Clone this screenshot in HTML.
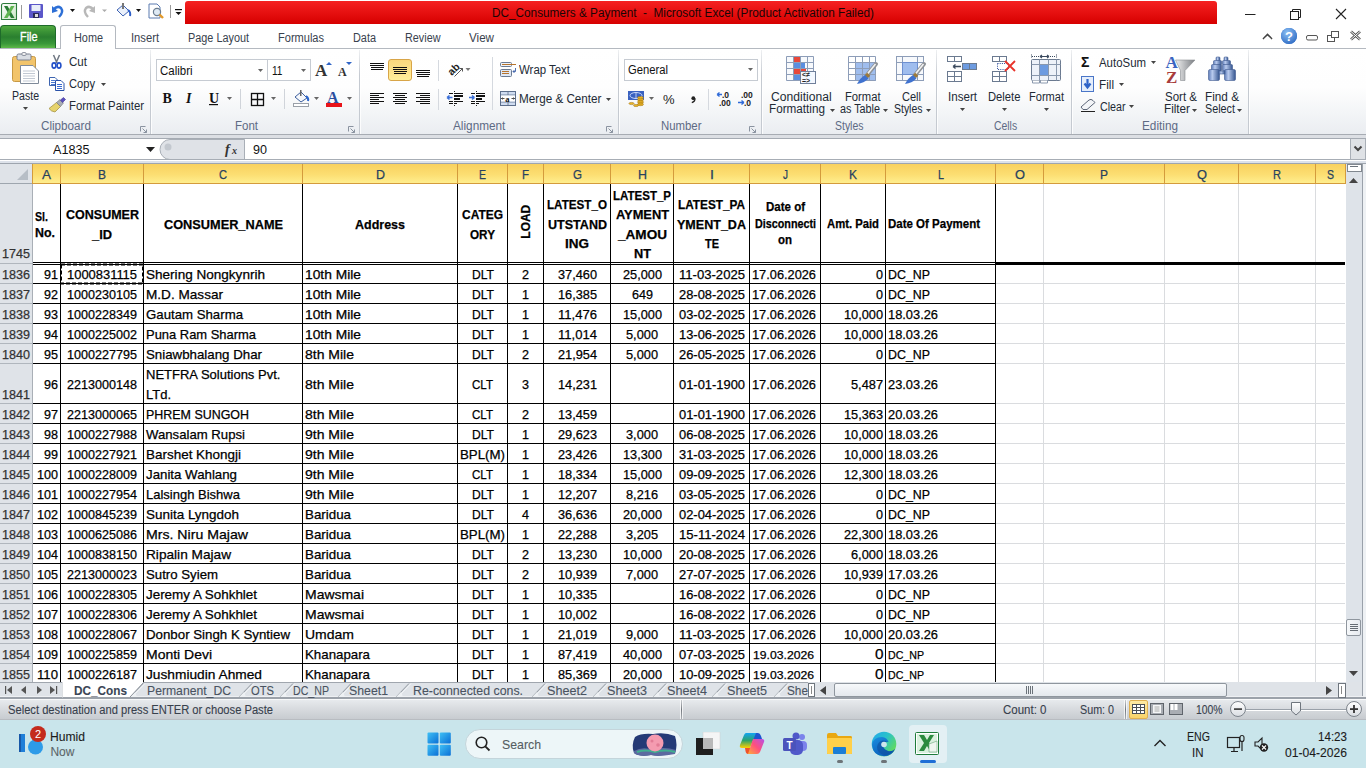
<!DOCTYPE html><html><head><meta charset="utf-8"><style>
html,body{margin:0;padding:0;}
body{width:1366px;height:768px;overflow:hidden;position:relative;background:#fff;font-family:'Liberation Sans',sans-serif;}
body>div,body>svg{position:absolute;}
.t{white-space:pre;line-height:normal;transform-origin:0 0;-webkit-text-stroke:0.25px currentColor;}
</style></head><body>
<div style="left:0px;top:0px;width:1366px;height:25px;background:#fff;"></div>
<div style="left:185px;top:1px;width:1032px;height:23px;background:linear-gradient(#f52222,#e30d0d 60%,#d60000);border-radius:3px 3px 0 0;"></div>
<div class="t" style="left:491.50px;top:6px;font-size:12px;color:#1a0505;transform:scaleX(0.9808);-webkit-text-stroke-width:0.0px;">DC_Consumers &amp; Payment  -  Microsoft Excel (Product Activation Failed)</div>
<svg style="left:0px;top:2px" width="185" height="20">
<defs><linearGradient id="xlg" x1="0" y1="0" x2="1" y2="1"><stop offset="0" stop-color="#ffffff"/><stop offset="1" stop-color="#c8e6c4"/></linearGradient></defs>
<path d="M3.5 1.5 H16.5 V17.5 H1.5 V3.5 Q1.5 1.5 3.5 1.5 Z" fill="url(#xlg)" stroke="#2e7d3c" stroke-width="1.1"/>
<path d="M4 4 L7.5 4 L14.5 16 L11 16 Z" fill="#2a7d35"/>
<path d="M11 4 L14.5 4 L7.5 16 L4 16 Z" fill="#5fb550"/>
<rect x="21" y="3" width="1" height="14" fill="#9a9a9a"/>
<rect x="29" y="2" width="14" height="14" fill="#5b57c9" rx="1"/>
<rect x="31.5" y="3" width="9" height="6" fill="#e9eef8"/>
<rect x="33" y="11" width="6" height="5" fill="#2b2b5a"/><rect x="35" y="12" width="3" height="3" fill="#ddd"/>
<path d="M53 8 Q57 3 61 6 Q64 10 59 15" fill="none" stroke="#2d6fd6" stroke-width="2.4"/>
<path d="M52 4 L52 11 L58 9 Z" fill="#2d6fd6"/>
<path d="M70 7 L75 7 L72.5 10 Z" fill="#111"/>
<path d="M94 8 Q90 3 86 6 Q83 10 88 15" fill="none" stroke="#b8b8b8" stroke-width="2.4"/>
<path d="M95 4 L95 11 L89 9 Z" fill="#b8b8b8"/>
<path d="M102 7.5 L107 7.5 L104.5 10 Z" fill="#aaa"/>
<path d="M117 8 L123 3 L129 9 L123 14 Z" fill="#eaf0fa" stroke="#3e63b4" stroke-width="1"/>
<path d="M128 8 Q131 10 130 14" fill="none" stroke="#2d5fc8" stroke-width="2"/>
<rect x="122" y="1" width="2" height="6" fill="#777"/>
<path d="M136 7 L141 7 L138.5 10 Z" fill="#111"/>
<path d="M149 2 L157 2 L160 5 L160 16 L149 16 Z" fill="#fff" stroke="#5a7ab0" stroke-width="1"/>
<circle cx="157" cy="10" r="3.6" fill="#dfeaf4" stroke="#6b7d90" stroke-width="1.2"/>
<path d="M159.5 12.5 L163 16" stroke="#e39a2a" stroke-width="2.4"/>
<rect x="170" y="3" width="1" height="13" fill="#9a9a9a"/>
<rect x="175" y="7" width="7" height="1.2" fill="#111"/>
<path d="M175.5 10 L181.5 10 L178.5 13 Z" fill="#111"/>
</svg>
<svg style="left:1230px;top:0px" width="136" height="25">
<rect x="15" y="14" width="10.5" height="1" fill="#222"/>
<rect x="60.5" y="11.5" width="8" height="8" fill="none" stroke="#222" stroke-width="1"/>
<path d="M62.5 11.5 L62.5 9.5 L70.5 9.5 L70.5 17.5 L68.5 17.5" fill="none" stroke="#222" stroke-width="1"/>
<path d="M106 9 L116 19 M116 9 L106 19" stroke="#222" stroke-width="1.1"/>
</svg>
<div style="left:0px;top:25px;width:1366px;height:23px;background:#fff;"></div>
<div style="left:0px;top:48px;width:1366px;height:1px;background:#b4b9c0;"></div>
<div style="left:0px;top:25px;width:56px;height:23px;background:linear-gradient(#52aa40 0%,#3b9336 25%,#2a7f2f 50%,#3a983a 80%,#5db949 100%);border:1px solid #1e6b2a;border-bottom:none;border-radius:4px 4px 0 0;box-sizing:border-box;"></div>
<div class="t" style="left:19.50px;top:30px;font-size:12px;color:#fff;transform:scaleX(0.9047);-webkit-text-stroke-width:0.35px;">File</div>
<div style="left:60px;top:25px;width:56px;height:24px;background:#fff;border:1px solid #b4b9c0;border-bottom:none;border-radius:3px 3px 0 0;box-sizing:border-box;"></div>
<div class="t" style="left:73.50px;top:31px;font-size:12px;color:#39424e;transform:scaleX(0.9058);-webkit-text-stroke-width:0.0px;">Home</div>
<div class="t" style="left:131.30px;top:31px;font-size:12px;color:#39424e;transform:scaleX(0.9328);-webkit-text-stroke-width:0.0px;">Insert</div>
<div class="t" style="left:188.40px;top:31px;font-size:12px;color:#39424e;transform:scaleX(0.9052);-webkit-text-stroke-width:0.0px;">Page Layout</div>
<div class="t" style="left:278.20px;top:31px;font-size:12px;color:#39424e;transform:scaleX(0.9197);-webkit-text-stroke-width:0.0px;">Formulas</div>
<div class="t" style="left:353.40px;top:31px;font-size:12px;color:#39424e;transform:scaleX(0.9070);-webkit-text-stroke-width:0.0px;">Data</div>
<div class="t" style="left:405.40px;top:31px;font-size:12px;color:#39424e;transform:scaleX(0.9019);-webkit-text-stroke-width:0.0px;">Review</div>
<div class="t" style="left:469.20px;top:31px;font-size:12px;color:#39424e;transform:scaleX(0.9691);-webkit-text-stroke-width:0.0px;">View</div>
<svg style="left:1255px;top:26px" width="111" height="20">
<path d="M8 13 L12.5 8.5 L17 13" fill="none" stroke="#444" stroke-width="1.6"/>
<path d="M9 13.5 L12.5 10.5 L16 13.5" fill="none" stroke="#fff" stroke-width="0.8"/>
<circle cx="34" cy="10" r="8" fill="#3d7fd6"/>
<circle cx="34" cy="10" r="8" fill="url(#hg)"/>
<defs><radialGradient id="hg" cx="0.4" cy="0.3" r="0.8"><stop offset="0" stop-color="#8cc0f5"/><stop offset="1" stop-color="#2a66c0"/></radialGradient></defs>
<text x="34" y="14.5" font-family="Liberation Sans" font-size="13" font-weight="bold" fill="#fff" text-anchor="middle">?</text>
<rect x="51.5" y="9.5" width="11" height="4.5" rx="1.5" fill="#fdfdfd" stroke="#555" stroke-width="1"/>
<rect x="72.5" y="9.5" width="7" height="6" fill="#fff" stroke="#555"/>
<rect x="76.5" y="5.5" width="7" height="6" fill="#fff" stroke="#555"/>
<path d="M96 5.5 L105 13.5 M105 5.5 L96 13.5" stroke="#555" stroke-width="2.6"/>
<path d="M96 5.5 L105 13.5 M105 5.5 L96 13.5" stroke="#fff" stroke-width="1"/>
</svg>
<div style="left:0px;top:49px;width:1366px;height:85px;background:linear-gradient(#ffffff 0%,#fefefe 45%,#f3f5f7 75%,#eaedf1 100%);"></div>
<div style="left:0px;top:134px;width:1366px;height:1px;background:#a7acb3;"></div>
<div style="left:0px;top:135px;width:1366px;height:3px;background:#dcdfe4;"></div>
<div style="left:150px;top:50px;width:1px;height:84px;background:linear-gradient(rgba(200,205,212,0.3),#c5cad1 30%,#c5cad1);"></div>
<div style="left:151px;top:50px;width:1px;height:84px;background:rgba(255,255,255,0.8);"></div>
<div style="left:359px;top:50px;width:1px;height:84px;background:linear-gradient(rgba(200,205,212,0.3),#c5cad1 30%,#c5cad1);"></div>
<div style="left:360px;top:50px;width:1px;height:84px;background:rgba(255,255,255,0.8);"></div>
<div style="left:618px;top:50px;width:1px;height:84px;background:linear-gradient(rgba(200,205,212,0.3),#c5cad1 30%,#c5cad1);"></div>
<div style="left:619px;top:50px;width:1px;height:84px;background:rgba(255,255,255,0.8);"></div>
<div style="left:761px;top:50px;width:1px;height:84px;background:linear-gradient(rgba(200,205,212,0.3),#c5cad1 30%,#c5cad1);"></div>
<div style="left:762px;top:50px;width:1px;height:84px;background:rgba(255,255,255,0.8);"></div>
<div style="left:936px;top:50px;width:1px;height:84px;background:linear-gradient(rgba(200,205,212,0.3),#c5cad1 30%,#c5cad1);"></div>
<div style="left:937px;top:50px;width:1px;height:84px;background:rgba(255,255,255,0.8);"></div>
<div style="left:1071px;top:50px;width:1px;height:84px;background:linear-gradient(rgba(200,205,212,0.3),#c5cad1 30%,#c5cad1);"></div>
<div style="left:1072px;top:50px;width:1px;height:84px;background:rgba(255,255,255,0.8);"></div>
<div style="left:1248px;top:50px;width:1px;height:84px;background:linear-gradient(rgba(200,205,212,0.3),#c5cad1 30%,#c5cad1);"></div>
<div style="left:1249px;top:50px;width:1px;height:84px;background:rgba(255,255,255,0.8);"></div>
<div class="t" style="left:40.60px;top:119px;font-size:12px;color:#5d6a84;transform:scaleX(0.9732);-webkit-text-stroke-width:0.0px;">Clipboard</div>
<div class="t" style="left:234.50px;top:119px;font-size:12px;color:#5d6a84;transform:scaleX(0.9577);-webkit-text-stroke-width:0.0px;">Font</div>
<div class="t" style="left:453.20px;top:119px;font-size:12px;color:#5d6a84;transform:scaleX(0.9817);-webkit-text-stroke-width:0.0px;">Alignment</div>
<div class="t" style="left:660.50px;top:119px;font-size:12px;color:#5d6a84;transform:scaleX(0.9488);-webkit-text-stroke-width:0.0px;">Number</div>
<div class="t" style="left:835.40px;top:119px;font-size:12px;color:#5d6a84;transform:scaleX(0.8719);-webkit-text-stroke-width:0.0px;">Styles</div>
<div class="t" style="left:993.60px;top:119px;font-size:12px;color:#5d6a84;transform:scaleX(0.8661);-webkit-text-stroke-width:0.0px;">Cells</div>
<div class="t" style="left:1142.40px;top:119px;font-size:12px;color:#5d6a84;transform:scaleX(0.9808);-webkit-text-stroke-width:0.0px;">Editing</div>
<svg style="left:140px;top:126px" width="8" height="8"><path d="M0.5 0.5 L5.5 0.5 M0.5 0.5 L0.5 5.5" stroke="#8a93a0"/><path d="M2.5 2.5 L6.5 6.5 M6.5 3.5 L6.5 6.5 L3.5 6.5" stroke="#8a93a0" fill="none"/></svg>
<svg style="left:348px;top:126px" width="8" height="8"><path d="M0.5 0.5 L5.5 0.5 M0.5 0.5 L0.5 5.5" stroke="#8a93a0"/><path d="M2.5 2.5 L6.5 6.5 M6.5 3.5 L6.5 6.5 L3.5 6.5" stroke="#8a93a0" fill="none"/></svg>
<svg style="left:606px;top:126px" width="8" height="8"><path d="M0.5 0.5 L5.5 0.5 M0.5 0.5 L0.5 5.5" stroke="#8a93a0"/><path d="M2.5 2.5 L6.5 6.5 M6.5 3.5 L6.5 6.5 L3.5 6.5" stroke="#8a93a0" fill="none"/></svg>
<svg style="left:749px;top:126px" width="8" height="8"><path d="M0.5 0.5 L5.5 0.5 M0.5 0.5 L0.5 5.5" stroke="#8a93a0"/><path d="M2.5 2.5 L6.5 6.5 M6.5 3.5 L6.5 6.5 L3.5 6.5" stroke="#8a93a0" fill="none"/></svg>
<svg style="left:8px;top:52px" width="36" height="36">
<rect x="4.5" y="4.5" width="23" height="25" rx="2" fill="#f2c46b" stroke="#c79944"/>
<rect x="9" y="2" width="14" height="6" rx="1.5" fill="#d9dde3" stroke="#7b8190"/>
<rect x="14" y="0.5" width="4" height="3" rx="1" fill="#eee" stroke="#7b8190" stroke-width="0.8"/>
<path d="M12.5 13.5 L25 13.5 L30.5 19 L30.5 31.5 L12.5 31.5 Z" fill="#fff" stroke="#7f8a99"/>
<path d="M15 19h12M15 21.5h12M15 24h12M15 26.5h12M15 29h12" stroke="#c2c9d3" stroke-width="1"/>
</svg>
<div class="t" style="left:11.50px;top:89px;font-size:12px;color:#222a35;transform:scaleX(0.8798);-webkit-text-stroke-width:0.0px;">Paste</div>
<svg style="left:23px;top:107px" width="5" height="3"><path d="M0 0 L5 0 L2.5 3 Z" fill="#444"/></svg>
<svg style="left:48px;top:53px" width="18" height="62">
<path d="M5.5 2 L9 10 M11.5 2 L8 10" stroke="#6f7782" stroke-width="1.5"/>
<ellipse cx="6" cy="12.5" rx="1.9" ry="2.6" fill="#fff" stroke="#2350c8" stroke-width="1.6"/>
<ellipse cx="11" cy="12.5" rx="1.9" ry="2.6" fill="#fff" stroke="#2350c8" stroke-width="1.6"/>
<path d="M1.5 24.5 H7 L9.5 27 V32.5 H1.5 Z" fill="#fff" stroke="#3d64b0"/>
<path d="M3 27.5h4M3 29.5h5M3 31.5h5" stroke="#4a78d0"/>
<path d="M7.5 27.5 H13 L16 30.5 V37.5 H7.5 Z" fill="#fff" stroke="#2b52a8"/>
<path d="M9 31.5h5M9 33.5h5M9 35.5h5" stroke="#3a6ad0"/>
<path d="M1 55.5 L8.5 49.5 L12.5 53.5 L7 59 Q3 58.5 1 55.5 Z" fill="#e6d36c" stroke="#9c8a3a" stroke-width="0.7"/>
<path d="M8.5 49.5 L12 46.5 L15.5 50 L12.5 53.5 Z" fill="#a9adb5" stroke="#6f737a" stroke-width="0.6"/>
<path d="M12.5 47 L15.5 44.5 L17.5 46.5 L14.5 49.5 Z" fill="#5a4fc0" stroke="#3a3090" stroke-width="0.6"/>
</svg>
<div class="t" style="left:68.50px;top:55px;font-size:12px;color:#222a35;transform:scaleX(0.9632);-webkit-text-stroke-width:0.0px;">Cut</div>
<div class="t" style="left:68.50px;top:77px;font-size:12px;color:#222a35;transform:scaleX(0.9281);-webkit-text-stroke-width:0.0px;">Copy</div>
<svg style="left:101px;top:83px" width="5" height="3"><path d="M0 0 L5 0 L2.5 3 Z" fill="#444"/></svg>
<div class="t" style="left:68.60px;top:99px;font-size:12px;color:#222a35;transform:scaleX(0.9451);-webkit-text-stroke-width:0.0px;">Format Painter</div>
<div style="left:156px;top:59px;width:112px;height:22px;background:#fff;border:1px solid #c6cbd2;box-sizing:border-box;"></div>
<div style="left:267px;top:59px;width:44px;height:22px;background:#fff;border:1px solid #c6cbd2;box-sizing:border-box;"></div>
<div class="t" style="left:159.70px;top:64px;font-size:12px;color:#111;transform:scaleX(0.9554);-webkit-text-stroke-width:0.0px;">Calibri</div>
<div class="t" style="left:271.80px;top:64px;font-size:12px;color:#111;transform:scaleX(0.8421);-webkit-text-stroke-width:0.0px;">11</div>
<svg style="left:258px;top:69px" width="5" height="3"><path d="M0 0 L5 0 L2.5 3 Z" fill="#666"/></svg>
<svg style="left:301px;top:69px" width="5" height="3"><path d="M0 0 L5 0 L2.5 3 Z" fill="#666"/></svg>
<svg style="left:314px;top:60px" width="40" height="18">
<text x="1" y="16" font-family="Liberation Serif" font-size="17" font-weight="bold" fill="#333">A</text>
<path d="M12 5 L15 2 L18 5 Z" fill="#2f64c6"/>
<text x="24" y="16" font-family="Liberation Serif" font-size="12" font-weight="bold" fill="#333">A</text>
<path d="M32 2 L38 2 L35 5 Z" fill="#2f64c6"/>
</svg>
<svg style="left:160px;top:88px" width="200" height="22">
<text x="2.5" y="15" font-family="Liberation Serif" font-size="14" font-weight="bold" fill="#111">B</text>
<text x="26" y="15" font-family="Liberation Serif" font-size="14" font-style="italic" font-weight="bold" fill="#111">I</text>
<text x="49" y="15" font-family="Liberation Serif" font-size="14" font-weight="bold" fill="#111">U</text>
<rect x="49" y="16" width="9" height="1.2" fill="#111"/>
<path d="M67 9 L72 9 L69.5 12 Z" fill="#666"/>
<rect x="80" y="1" width="1" height="20" fill="#d0d4da"/>
<rect x="91.5" y="5.5" width="12" height="12" fill="none" stroke="#111" stroke-width="1.3"/>
<path d="M97.5 5.5 V17.5 M91.5 11.5 H103.5" stroke="#111" stroke-width="1.3"/>
<path d="M111 9 L116 9 L113.5 12 Z" fill="#666"/>
<rect x="124" y="1" width="1" height="20" fill="#d0d4da"/>
<path d="M135 9 L141 4 L147 10 L141 14 Z" fill="#f6f8fb" stroke="#3d5f9e"/>
<path d="M146 8 Q149 10 148 13" stroke="#2d66cc" stroke-width="2" fill="none"/>
<rect x="140" y="2" width="1.5" height="6" fill="#666"/>
<rect x="133.5" y="15.5" width="15" height="3" fill="#fff" stroke="#9aa0a8"/>
<path d="M154 9 L159 9 L156.5 12 Z" fill="#666"/>
<text x="167" y="15" font-family="Liberation Serif" font-size="16" font-weight="bold" fill="#2a4ea0">A</text>
<rect x="166" y="15" width="16" height="4" fill="#e8141a"/>
<path d="M187 9 L192 9 L189.5 12 Z" fill="#666"/>
</svg>
<div style="left:388px;top:59px;width:24px;height:22px;background:linear-gradient(#fcd97e,#fde58f 60%,#fff09b);border:1px solid #d8a548;border-radius:3px;box-sizing:border-box;"></div>
<svg style="left:360px;top:56px" width="260" height="56"><rect x="10" y="7" width="14" height="1" fill="#111"/><rect x="10" y="9" width="14" height="1" fill="#111"/><rect x="11" y="11" width="13" height="1" fill="#111"/><rect x="11" y="13" width="12" height="1" fill="#111"/><rect x="33" y="11" width="14" height="1" fill="#111"/><rect x="33" y="13" width="14" height="1" fill="#111"/><rect x="34" y="15" width="13" height="1" fill="#111"/><rect x="34" y="17" width="12" height="1" fill="#111"/><rect x="56" y="14" width="14" height="1" fill="#111"/><rect x="56" y="16" width="14" height="1" fill="#111"/><rect x="57" y="18" width="13" height="1" fill="#111"/><rect x="57" y="20" width="12" height="1" fill="#111"/><rect x="78" y="4" width="1" height="21" fill="#d5d9df"/><rect x="78" y="33" width="1" height="21" fill="#d5d9df"/><g transform="rotate(-45 93.5 13)"><text x="87.3" y="16.8" font-family="Liberation Sans" font-size="10.5" font-weight="bold" fill="#222">ab</text></g><path d="M94.5 20.5 L102.5 12.5 M99.5 12.5 H102.5 V15.5" stroke="#444" stroke-width="0.9" fill="none"/><path d="M105.5 12 L110.5 12 L108 15 Z" fill="#777"/><rect x="132" y="1" width="1" height="53" fill="#d5d9df"/><rect x="10" y="37" width="14" height="1" fill="#111"/><rect x="10" y="39" width="9" height="1" fill="#111"/><rect x="10" y="41" width="14" height="1" fill="#111"/><rect x="10" y="43" width="9" height="1" fill="#111"/><rect x="10" y="45" width="14" height="1" fill="#111"/><rect x="10" y="47" width="9" height="1" fill="#111"/><rect x="33" y="37" width="14" height="1" fill="#111"/><rect x="35" y="39" width="10" height="1" fill="#111"/><rect x="33" y="41" width="14" height="1" fill="#111"/><rect x="35" y="43" width="10" height="1" fill="#111"/><rect x="33" y="45" width="14" height="1" fill="#111"/><rect x="35" y="47" width="10" height="1" fill="#111"/><rect x="56" y="37" width="14" height="1" fill="#111"/><rect x="60" y="39" width="10" height="1" fill="#111"/><rect x="56" y="41" width="14" height="1" fill="#111"/><rect x="60" y="43" width="10" height="1" fill="#111"/><rect x="56" y="45" width="14" height="1" fill="#111"/><rect x="60" y="47" width="10" height="1" fill="#111"/><g transform="translate(0,0)" shape-rendering="crispEdges"><rect x="94" y="35" width="1" height="1" fill="#222"/><rect x="94" y="49" width="1" height="1" fill="#222"/><rect x="94" y="37" width="9" height="1" fill="#111"/><rect x="94" y="39" width="9" height="2" fill="#111"/><rect x="94" y="42" width="6" height="2" fill="#111"/><rect x="94" y="45" width="9" height="1" fill="#111"/><rect x="94" y="47" width="3" height="1" fill="#111"/><rect x="89" y="37" width="4" height="1" fill="#111"/><rect x="89" y="45" width="4" height="1" fill="#111"/><rect x="89" y="47" width="4" height="1" fill="#111"/></g><path transform="translate(0,0)" d="M87 41.5 L92.5 41.5 M87 41.5 L89.5 39.5 M87 41.5 L89.5 43.5" stroke="#3a6fd8" stroke-width="1.6" fill="none"/><g transform="translate(22,0)" shape-rendering="crispEdges"><rect x="94" y="35" width="1" height="1" fill="#222"/><rect x="94" y="49" width="1" height="1" fill="#222"/><rect x="94" y="37" width="9" height="1" fill="#111"/><rect x="94" y="39" width="9" height="2" fill="#111"/><rect x="94" y="42" width="6" height="2" fill="#111"/><rect x="94" y="45" width="9" height="1" fill="#111"/><rect x="94" y="47" width="3" height="1" fill="#111"/><rect x="89" y="37" width="4" height="1" fill="#111"/><rect x="89" y="45" width="4" height="1" fill="#111"/><rect x="89" y="47" width="4" height="1" fill="#111"/></g><path transform="translate(22,0)" d="M87 41.5 L92.5 41.5 M92.5 41.5 L90 39.5 M92.5 41.5 L90 43.5" stroke="#3a6fd8" stroke-width="1.6" fill="none"/><rect x="140.5" y="6.5" width="11" height="4" rx="1" fill="#eef3fa" stroke="#6a7a92"/>
<path d="M142 8.5h14" stroke="#b8742c" stroke-width="1"/>
<rect x="140.5" y="13.5" width="11" height="7" rx="1" fill="#dfe8f5" stroke="#6a7a92"/>
<path d="M142 15.5h7M142 17.5h7" stroke="#b8742c" stroke-width="1"/>
<path d="M155.5 12 V15.5 H153 M153 15.5 l1.5 -1.5 M153 15.5 l1.5 1.5" stroke="#3a5fa8" stroke-width="0.9" fill="none"/>
<rect x="140.5" y="35.5" width="15" height="14" fill="#cfdcf0" stroke="#5d6f8c"/>
<path d="M148 35.5v3.5M148 46v3.5M140.5 39h15M140.5 46h15" stroke="#5d6f8c" stroke-width="0.8"/>
<rect x="141" y="39.5" width="14" height="6" fill="#fff"/>
<path d="M141.5 42.5h3M141.5 42.5l1 -1M141.5 42.5l1 1M154.5 42.5h-3M154.5 42.5l-1 -1M154.5 42.5l-1 1" stroke="#222" stroke-width="0.8" fill="none"/>
<text x="145.3" y="45.5" font-family="Liberation Serif" font-size="8.5" font-weight="bold" fill="#111">a</text></svg>
<div class="t" style="left:519.40px;top:63px;font-size:12px;color:#222a35;transform:scaleX(0.9519);-webkit-text-stroke-width:0.0px;">Wrap Text</div>
<div class="t" style="left:519.40px;top:92px;font-size:12px;color:#222a35;transform:scaleX(0.9740);-webkit-text-stroke-width:0.0px;">Merge &amp; Center</div>
<svg style="left:606px;top:98px" width="5" height="3"><path d="M0 0 L5 0 L2.5 3 Z" fill="#444"/></svg>
<div style="left:624px;top:59px;width:134px;height:22px;background:#fff;border:1px solid #c6cbd2;box-sizing:border-box;"></div>
<div class="t" style="left:627.60px;top:63px;font-size:12px;color:#111;transform:scaleX(0.9367);-webkit-text-stroke-width:0.0px;">General</div>
<svg style="left:748px;top:68px" width="5" height="3"><path d="M0 0 L5 0 L2.5 3 Z" fill="#666"/></svg>
<svg style="left:626px;top:88px" width="132" height="22">
<rect x="2" y="3" width="16" height="9" fill="#3a62c0"/>
<ellipse cx="10" cy="7.5" rx="6" ry="3" fill="none" stroke="#d7e3ff" stroke-width="0.9"/>
<path d="M10 4.5v6" stroke="#d7e3ff" stroke-width="0.8"/>
<g fill="#e9b424" stroke="#9a6c10" stroke-width="0.5">
<ellipse cx="14.5" cy="16.5" rx="3" ry="1.2"/><ellipse cx="14.5" cy="14.8" rx="3" ry="1.2"/><ellipse cx="14.5" cy="13.1" rx="3" ry="1.2"/><ellipse cx="14.5" cy="11.4" rx="3" ry="1.2"/><ellipse cx="14.5" cy="9.7" rx="3" ry="1.2"/>
<ellipse cx="5.5" cy="15.5" rx="2.6" ry="1.1"/><ellipse cx="10" cy="17.5" rx="2.6" ry="1.1"/>
</g>
<path d="M23 9 L28 9 L25.5 12 Z" fill="#666"/>
<text x="37" y="15.8" font-family="Liberation Sans" font-size="13" fill="#222">%</text>
<circle cx="67.3" cy="10.2" r="1.9" fill="#222"/><path d="M69 10.5 Q69.2 13.5 65.8 14.6" stroke="#222" stroke-width="1.3" fill="none"/>
<rect x="82" y="1" width="1" height="21" fill="#d5d9df"/>
<text x="96" y="10" font-family="Liberation Sans" font-size="8.5" font-weight="bold" fill="#222">.0</text>
<text x="93" y="17.5" font-family="Liberation Sans" font-size="8.5" font-weight="bold" fill="#222">.00</text>
<path d="M91 6.5 L96 6.5 M91 6.5 L93.5 4.5 M91 6.5 L93.5 8.5" stroke="#2f6ad8" stroke-width="1.3"/>
<text x="115" y="10" font-family="Liberation Sans" font-size="8.5" font-weight="bold" fill="#222">.00</text>
<text x="118" y="17.5" font-family="Liberation Sans" font-size="8.5" font-weight="bold" fill="#222">.0</text>
<path d="M112 14.5 L118 14.5 M118 14.5 L115.5 12.5 M118 14.5 L115.5 16.5" stroke="#2f6ad8" stroke-width="1.3"/>
</svg>
<svg style="left:784px;top:54px" width="146" height="32">
<defs><linearGradient id="brh" x1="0" y1="0" x2="1" y2="0"><stop offset="0" stop-color="#fff"/><stop offset="1" stop-color="#9a9da2"/></linearGradient></defs>
<g shape-rendering="crispEdges">
<rect x="2" y="2" width="28" height="25" fill="#f7f9fc"/>
<rect x="9" y="2" width="7" height="6" fill="#e8473a"/><rect x="9" y="8" width="12" height="7" fill="#5a8ee0"/>
<rect x="9" y="15" width="13" height="6" fill="#e8473a"/><rect x="9" y="21" width="7" height="6" fill="#5a8ee0"/>
</g>
<path d="M2.5 2.5H29.5V26.5H2.5Z M2.5 8.5H29.5M2.5 14.5H29.5M2.5 20.5H29.5M9.5 2.5V26.5M16.5 2.5V26.5M23.5 2.5V26.5" fill="none" stroke="#8d9db8"/>
<rect x="16.5" y="17.5" width="15" height="12" fill="#f4f8ff" stroke="#6f7f9a"/>
<text x="18" y="23" font-family="Liberation Sans" font-size="7" font-weight="bold" fill="#222">&lt;&#8800;</text>
<text x="18" y="29" font-family="Liberation Sans" font-size="7" font-weight="bold" fill="#222">=&gt;</text>
<g transform="translate(62,0)">
<rect x="9" y="8" width="21" height="19" fill="#9fbdee" shape-rendering="crispEdges"/>
<path d="M2.5 2.5H29.5V26.5H2.5Z M2.5 8.5H29.5M2.5 14.5H29.5M2.5 20.5H29.5M9.5 2.5V26.5M16.5 2.5V26.5M23.5 2.5V26.5" fill="none" stroke="#8d9db8"/>
<path d="M30 10 L21 21" stroke="#8e9297" stroke-width="4" stroke-linecap="round"/><path d="M29.5 10 L21 20.5" stroke="#f3f3f3" stroke-width="1.6"/>
<path d="M20 20 L23 23" stroke="#9b7a3c" stroke-width="3.5"/>
<path d="M19 21 Q14 24 11 30 Q18 29 22.5 24.5 Z" fill="#3f72cf"/>
</g>
<g transform="translate(110,0)">
<rect x="2.5" y="2.5" width="27" height="24" fill="#f7f9fc" stroke="#8d9db8"/>
<path d="M2.5 8.5H29.5M2.5 20.5H29.5M8.5 2.5V26.5M23.5 2.5V26.5" stroke="#8d9db8"/>
<rect x="8.5" y="8.5" width="15" height="12" fill="#9fbdee" stroke="#6d8fd0"/>
<path d="M30 10 L21 21" stroke="#8e9297" stroke-width="4" stroke-linecap="round"/><path d="M29.5 10 L21 20.5" stroke="#f3f3f3" stroke-width="1.6"/>
<path d="M20 20 L23 23" stroke="#9b7a3c" stroke-width="3.5"/>
<path d="M19 21 Q14 24 11 30 Q18 29 22.5 24.5 Z" fill="#3f72cf"/>
</g>
</svg>
<div class="t" style="left:771.10px;top:90px;font-size:12px;color:#222a35;transform:scaleX(1.0092);-webkit-text-stroke-width:0.0px;">Conditional</div>
<div class="t" style="left:769.00px;top:102px;font-size:12px;color:#222a35;transform:scaleX(0.9763);-webkit-text-stroke-width:0.0px;">Formatting</div>
<svg style="left:829.5px;top:109px" width="5" height="3"><path d="M0 0 L5 0 L2.5 3 Z" fill="#444"/></svg>
<div class="t" style="left:845.40px;top:90px;font-size:12px;color:#222a35;transform:scaleX(0.9365);-webkit-text-stroke-width:0.0px;">Format</div>
<div class="t" style="left:839.50px;top:102px;font-size:12px;color:#222a35;transform:scaleX(0.8992);-webkit-text-stroke-width:0.0px;">as Table</div>
<svg style="left:883px;top:109px" width="5" height="3"><path d="M0 0 L5 0 L2.5 3 Z" fill="#444"/></svg>
<div class="t" style="left:902.00px;top:90px;font-size:12px;color:#222a35;transform:scaleX(0.9191);-webkit-text-stroke-width:0.0px;">Cell</div>
<div class="t" style="left:893.50px;top:102px;font-size:12px;color:#222a35;transform:scaleX(0.8719);-webkit-text-stroke-width:0.0px;">Styles</div>
<svg style="left:925.5px;top:109px" width="5" height="3"><path d="M0 0 L5 0 L2.5 3 Z" fill="#444"/></svg>
<svg style="left:945px;top:53px" width="120" height="34">
<g stroke="#6b7a90" fill="#fff">
<rect x="2.5" y="3.5" width="14" height="5"/><path d="M9.5 3.5v5"/>
<rect x="2.5" y="18.5" width="14" height="10"/><path d="M9.5 18.5v10M2.5 23.5h14"/>
<rect x="17.5" y="10.5" width="14" height="6" fill="#6d9be0"/><path d="M24.5 10.5v6"/>
</g>
<path d="M8 13.5 H16 M8 13.5 L10.5 11.5 M8 13.5 L10.5 15.5" stroke="#3b4a5e" stroke-width="1.3" fill="none"/>
<g stroke="#6b7a90" fill="#fff">
<rect x="47.5" y="3.5" width="14" height="5"/><path d="M54.5 3.5v5"/>
<rect x="47.5" y="18.5" width="14" height="10"/><path d="M54.5 18.5v10M47.5 23.5h14"/>
</g>
<rect x="52.5" y="10.5" width="11" height="6" fill="none" stroke="#2b4a9a" stroke-dasharray="1 1.2"/>
<path d="M60 8 L70 18 M70 8 L60 18" stroke="#e8332a" stroke-width="1.8"/>
<g transform="translate(0,0)">
<path d="M86.5 1.5v4M111.5 1.5v4M87 3.5h24" stroke="#3b4a5e" stroke-dasharray="1 1"/>
<path d="M95 3.5h9 M95 3.5l2 -1.5M95 3.5l2 1.5M104 3.5l-2 -1.5M104 3.5l-2 1.5" stroke="#3b4a5e" stroke-width="1.1" fill="none"/>
<rect x="86.5" y="6.5" width="29" height="21" rx="1" fill="#eef2f9" stroke="#6b7a90"/>
<path d="M86.5 11.5h29M86.5 22.5h29M94.5 6.5v21M103.5 6.5v21M111.5 6.5v21" stroke="#8a98ad"/>
<rect x="95" y="12" width="8" height="10" fill="#6d9be0"/>
<path d="M87.5 27.5v2.5h7v-2.5M95.5 27.5v2.5h7v-2.5" stroke="#8a98ad" fill="#fff"/>
</g>
</svg>
<div class="t" style="left:948.20px;top:90px;font-size:12px;color:#222a35;transform:scaleX(0.9662);-webkit-text-stroke-width:0.0px;">Insert</div>
<div class="t" style="left:988.30px;top:90px;font-size:12px;color:#222a35;transform:scaleX(0.9341);-webkit-text-stroke-width:0.0px;">Delete</div>
<div class="t" style="left:1028.60px;top:90px;font-size:12px;color:#222a35;transform:scaleX(0.9207);-webkit-text-stroke-width:0.0px;">Format</div>
<svg style="left:960px;top:108px" width="5" height="3"><path d="M0 0 L5 0 L2.5 3 Z" fill="#444"/></svg>
<svg style="left:1002px;top:108px" width="5" height="3"><path d="M0 0 L5 0 L2.5 3 Z" fill="#444"/></svg>
<svg style="left:1044px;top:108px" width="5" height="3"><path d="M0 0 L5 0 L2.5 3 Z" fill="#444"/></svg>
<svg style="left:1078px;top:52px" width="170" height="64">
<text x="3" y="14.5" font-family="Liberation Sans" font-size="14" font-weight="bold" fill="#111">&#931;</text>
<rect x="3.5" y="24.5" width="12" height="15" fill="#e5eefb" stroke="#4a76c8"/>
<path d="M9.5 27 V34 M6.5 31.5 L9.5 35.5 L12.5 31.5" stroke="#2f64c8" stroke-width="2.2" fill="none"/>
<path d="M3 55 L11 48 Q13 46.5 15 48.5 L17 50.5 L9 57.5 L5 57.5 Z" fill="#f3f5f8" stroke="#5b6577"/>
<path d="M3 59.5h14" stroke="#222"/>
<defs><linearGradient id="fun" x1="0" y1="0" x2="1" y2="0"><stop offset="0" stop-color="#f0f0f0"/><stop offset="0.5" stop-color="#b5b7ba"/><stop offset="1" stop-color="#7b7e83"/></linearGradient>
<linearGradient id="bino" x1="0" y1="0" x2="1" y2="0"><stop offset="0" stop-color="#5d7bb8"/><stop offset="0.35" stop-color="#b9cbee"/><stop offset="1" stop-color="#34548f"/></linearGradient></defs>
<path d="M97.5 8 H117 L107 18.5 V28.5 H102.5 V18.5 Z" fill="url(#fun)" stroke="#8a8d92" stroke-width="0.6"/>
<text x="87.5" y="15.6" font-family="Liberation Serif" font-size="17" font-weight="bold" fill="#3a64c0">A</text>
<text x="88" y="30.8" font-family="Liberation Serif" font-size="17" font-weight="bold" fill="#a83c3c">Z</text>
<g fill="url(#bino)" stroke="#3f5b90" stroke-width="0.6">
<rect x="138" y="5" width="4" height="4" rx="1"/><rect x="146" y="5" width="4" height="4" rx="1"/>
<rect x="135.5" y="8.5" width="8" height="4.5" rx="1"/><rect x="144.5" y="8.5" width="8" height="4.5" rx="1"/>
<rect x="133.5" y="12.5" width="10" height="6.5" rx="1"/><rect x="144.5" y="12.5" width="10" height="6.5" rx="1"/>
<rect x="130.5" y="17.5" width="11" height="11" rx="1.5"/><rect x="146.5" y="17.5" width="11" height="11" rx="1.5"/>
<rect x="141" y="19" width="6" height="3"/>
</g>
</svg>
<div class="t" style="left:1099.20px;top:56px;font-size:12px;color:#222a35;transform:scaleX(0.9522);-webkit-text-stroke-width:0.0px;">AutoSum</div>
<svg style="left:1151px;top:61px" width="5" height="3"><path d="M0 0 L5 0 L2.5 3 Z" fill="#444"/></svg>
<div class="t" style="left:1099.00px;top:78px;font-size:12px;color:#222a35;transform:scaleX(0.9786);-webkit-text-stroke-width:0.0px;">Fill</div>
<svg style="left:1119px;top:83px" width="5" height="3"><path d="M0 0 L5 0 L2.5 3 Z" fill="#444"/></svg>
<div class="t" style="left:1099.60px;top:100px;font-size:12px;color:#222a35;transform:scaleX(0.8889);-webkit-text-stroke-width:0.0px;">Clear</div>
<svg style="left:1129px;top:105px" width="5" height="3"><path d="M0 0 L5 0 L2.5 3 Z" fill="#444"/></svg>
<div class="t" style="left:1164.80px;top:90px;font-size:12px;color:#222a35;transform:scaleX(0.9593);-webkit-text-stroke-width:0.0px;">Sort &amp;</div>
<div class="t" style="left:1163.50px;top:102px;font-size:12px;color:#222a35;transform:scaleX(0.9748);-webkit-text-stroke-width:0.0px;">Filter</div>
<svg style="left:1192px;top:109px" width="5" height="3"><path d="M0 0 L5 0 L2.5 3 Z" fill="#444"/></svg>
<div class="t" style="left:1205.20px;top:90px;font-size:12px;color:#222a35;transform:scaleX(0.9802);-webkit-text-stroke-width:0.0px;">Find &amp;</div>
<div class="t" style="left:1204.50px;top:102px;font-size:12px;color:#222a35;transform:scaleX(0.8993);-webkit-text-stroke-width:0.0px;">Select</div>
<svg style="left:1237px;top:109px" width="5" height="3"><path d="M0 0 L5 0 L2.5 3 Z" fill="#444"/></svg>
<div style="left:0px;top:138px;width:1366px;height:26px;background:#e1e5ea;"></div>
<div style="left:0px;top:138px;width:1366px;height:1px;background:#a5abb3;"></div>
<div style="left:0px;top:139px;width:175px;height:20px;background:#fff;"></div>
<div class="t" style="left:52.50px;top:142px;font-size:13px;color:#111;transform:scaleX(0.9709);-webkit-text-stroke-width:0.0px;">A1835</div>
<svg style="left:146px;top:147px" width="9" height="5"><path d="M0 0 L9 0 L4.5 5 Z" fill="#222"/></svg>
<svg style="left:158px;top:139px" width="90" height="21">
<path d="M12 0.5 H86.5 V20.5 H12 A10 10 0 0 1 12 0.5 Z" fill="#dfe2e7" stroke="#a9afb7"/>
<circle cx="10" cy="8" r="3.5" fill="#c3c8cf"/>
<text x="67" y="15" font-family="Liberation Serif" font-size="14" font-style="italic" font-weight="bold" fill="#333">f</text>
<text x="74" y="15" font-family="Liberation Serif" font-size="10" font-style="italic" font-weight="bold" fill="#333">x</text>
</svg>
<div style="left:245px;top:139px;width:1105px;height:21px;background:#fff;"></div>
<div class="t" style="left:253.00px;top:142px;font-size:13px;color:#111;transform:scaleX(0.9676);-webkit-text-stroke-width:0.0px;">90</div>
<div style="left:0px;top:159px;width:1366px;height:1px;background:#a7adb5;"></div>
<div style="left:0px;top:160px;width:1366px;height:1px;background:#ffffff;"></div>
<div style="left:0px;top:161px;width:1366px;height:2px;background:#dde2ea;"></div>
<div style="left:0px;top:163px;width:1366px;height:1px;background:#9ea5ae;"></div>
<div style="left:1350px;top:139px;width:16px;height:20px;background:#dfe2e6;border-left:1px solid #a9afb7;border-right:1px solid #a9afb7;box-sizing:border-box;"></div>
<svg style="left:1353px;top:145px" width="10" height="8"><path d="M1.5 1.5 L5 5 L8.5 1.5" fill="none" stroke="#444" stroke-width="2"/></svg>
<div style="left:0px;top:164px;width:32px;height:19px;background:#dfe3e8;"></div>
<svg style="left:17px;top:169px" width="12" height="12"><path d="M11 0 L11 11 L0 11 Z" fill="#b7bec6"/></svg>
<div style="left:32px;top:164px;width:1px;height:19px;background:#d49b3c;"></div>
<div style="left:33px;top:164px;width:1312px;height:19px;background:linear-gradient(#f9d15f,#fcde72 55%,#ffee8e);"></div>
<div style="left:32px;top:183px;width:1314px;height:1px;background:#d49b3c;"></div>
<div style="left:60px;top:164px;width:1px;height:19px;background:#d49b3c;"></div>
<div style="left:143px;top:164px;width:1px;height:19px;background:#d49b3c;"></div>
<div style="left:302px;top:164px;width:1px;height:19px;background:#d49b3c;"></div>
<div style="left:457px;top:164px;width:1px;height:19px;background:#d49b3c;"></div>
<div style="left:507px;top:164px;width:1px;height:19px;background:#d49b3c;"></div>
<div style="left:543px;top:164px;width:1px;height:19px;background:#d49b3c;"></div>
<div style="left:610px;top:164px;width:1px;height:19px;background:#d49b3c;"></div>
<div style="left:673px;top:164px;width:1px;height:19px;background:#d49b3c;"></div>
<div style="left:749px;top:164px;width:1px;height:19px;background:#d49b3c;"></div>
<div style="left:820px;top:164px;width:1px;height:19px;background:#d49b3c;"></div>
<div style="left:885px;top:164px;width:1px;height:19px;background:#d49b3c;"></div>
<div style="left:995px;top:164px;width:1px;height:19px;background:#d49b3c;"></div>
<div style="left:1043px;top:164px;width:1px;height:19px;background:#d49b3c;"></div>
<div style="left:1164px;top:164px;width:1px;height:19px;background:#d49b3c;"></div>
<div style="left:1238px;top:164px;width:1px;height:19px;background:#d49b3c;"></div>
<div style="left:1315px;top:164px;width:1px;height:19px;background:#d49b3c;"></div>
<div style="left:1345px;top:164px;width:1px;height:19px;background:#d49b3c;"></div>
<div class="t" style="left:42.00px;top:167px;font-size:13px;color:#27415f;transform:scaleX(1.0378);">A</div>
<div class="t" style="left:98.00px;top:167px;font-size:13px;color:#27415f;transform:scaleX(0.9225);">B</div>
<div class="t" style="left:219.00px;top:167px;font-size:13px;color:#27415f;transform:scaleX(0.8519);">C</div>
<div class="t" style="left:375.50px;top:167px;font-size:13px;color:#27415f;transform:scaleX(0.9584);">D</div>
<div class="t" style="left:479.00px;top:167px;font-size:13px;color:#27415f;transform:scaleX(0.8072);">E</div>
<div class="t" style="left:522.00px;top:167px;font-size:13px;color:#27415f;transform:scaleX(0.8802);">F</div>
<div class="t" style="left:572.50px;top:167px;font-size:13px;color:#27415f;transform:scaleX(0.8889);">G</div>
<div class="t" style="left:637.50px;top:167px;font-size:13px;color:#27415f;transform:scaleX(0.9584);">H</div>
<div class="t" style="left:709.50px;top:167px;font-size:13px;color:#27415f;transform:scaleX(1.1034);">I</div>
<div class="t" style="left:782.50px;top:167px;font-size:13px;color:#27415f;transform:scaleX(0.7692);">J</div>
<div class="t" style="left:849.00px;top:167px;font-size:13px;color:#27415f;transform:scaleX(0.9225);">K</div>
<div class="t" style="left:937.50px;top:167px;font-size:13px;color:#27415f;transform:scaleX(0.8294);">L</div>
<div class="t" style="left:1014.50px;top:167px;font-size:13px;color:#27415f;transform:scaleX(0.9877);">O</div>
<div class="t" style="left:1100.00px;top:167px;font-size:13px;color:#27415f;transform:scaleX(0.9225);">P</div>
<div class="t" style="left:1196.50px;top:167px;font-size:13px;color:#27415f;transform:scaleX(0.9877);">Q</div>
<div class="t" style="left:1273.00px;top:167px;font-size:13px;color:#27415f;transform:scaleX(0.8519);">R</div>
<div class="t" style="left:1327.00px;top:167px;font-size:13px;color:#27415f;transform:scaleX(0.8072);">S</div>
<div style="left:0px;top:184px;width:32px;height:498px;background:#dfe3e8;"></div>
<div style="left:32px;top:184px;width:1px;height:498px;background:#a9afb6;"></div>
<div style="left:0px;top:183px;width:32px;height:1px;background:#9ea6ae;"></div>
<div style="left:0px;top:263px;width:32px;height:1px;background:#b0b6bd;"></div>
<div class="t" style="left:2.00px;top:246px;font-size:13px;color:#333;transform:scaleX(0.9681);">1745</div>
<div style="left:0px;top:283px;width:32px;height:1px;background:#b0b6bd;"></div>
<div class="t" style="left:2.00px;top:267px;font-size:13px;color:#333;transform:scaleX(0.9681);">1836</div>
<div style="left:0px;top:303px;width:32px;height:1px;background:#b0b6bd;"></div>
<div class="t" style="left:2.00px;top:287px;font-size:13px;color:#333;transform:scaleX(0.9681);">1837</div>
<div style="left:0px;top:323px;width:32px;height:1px;background:#b0b6bd;"></div>
<div class="t" style="left:2.00px;top:307px;font-size:13px;color:#333;transform:scaleX(0.9681);">1838</div>
<div style="left:0px;top:343px;width:32px;height:1px;background:#b0b6bd;"></div>
<div class="t" style="left:2.00px;top:327px;font-size:13px;color:#333;transform:scaleX(0.9681);">1839</div>
<div style="left:0px;top:363px;width:32px;height:1px;background:#b0b6bd;"></div>
<div class="t" style="left:2.00px;top:347px;font-size:13px;color:#333;transform:scaleX(0.9681);">1840</div>
<div style="left:0px;top:403px;width:32px;height:1px;background:#b0b6bd;"></div>
<div class="t" style="left:2.00px;top:387px;font-size:13px;color:#333;transform:scaleX(0.9681);">1841</div>
<div style="left:0px;top:423px;width:32px;height:1px;background:#b0b6bd;"></div>
<div class="t" style="left:2.00px;top:407px;font-size:13px;color:#333;transform:scaleX(0.9681);">1842</div>
<div style="left:0px;top:443px;width:32px;height:1px;background:#b0b6bd;"></div>
<div class="t" style="left:2.00px;top:427px;font-size:13px;color:#333;transform:scaleX(0.9681);">1843</div>
<div style="left:0px;top:463px;width:32px;height:1px;background:#b0b6bd;"></div>
<div class="t" style="left:2.00px;top:447px;font-size:13px;color:#333;transform:scaleX(0.9681);">1844</div>
<div style="left:0px;top:483px;width:32px;height:1px;background:#b0b6bd;"></div>
<div class="t" style="left:2.00px;top:467px;font-size:13px;color:#333;transform:scaleX(0.9681);">1845</div>
<div style="left:0px;top:503px;width:32px;height:1px;background:#b0b6bd;"></div>
<div class="t" style="left:2.00px;top:487px;font-size:13px;color:#333;transform:scaleX(0.9681);">1846</div>
<div style="left:0px;top:523px;width:32px;height:1px;background:#b0b6bd;"></div>
<div class="t" style="left:2.00px;top:507px;font-size:13px;color:#333;transform:scaleX(0.9681);">1847</div>
<div style="left:0px;top:543px;width:32px;height:1px;background:#b0b6bd;"></div>
<div class="t" style="left:2.00px;top:527px;font-size:13px;color:#333;transform:scaleX(0.9681);">1848</div>
<div style="left:0px;top:563px;width:32px;height:1px;background:#b0b6bd;"></div>
<div class="t" style="left:2.00px;top:547px;font-size:13px;color:#333;transform:scaleX(0.9681);">1849</div>
<div style="left:0px;top:583px;width:32px;height:1px;background:#b0b6bd;"></div>
<div class="t" style="left:2.00px;top:567px;font-size:13px;color:#333;transform:scaleX(0.9681);">1850</div>
<div style="left:0px;top:603px;width:32px;height:1px;background:#b0b6bd;"></div>
<div class="t" style="left:2.00px;top:587px;font-size:13px;color:#333;transform:scaleX(0.9681);">1851</div>
<div style="left:0px;top:623px;width:32px;height:1px;background:#b0b6bd;"></div>
<div class="t" style="left:2.00px;top:607px;font-size:13px;color:#333;transform:scaleX(0.9681);">1852</div>
<div style="left:0px;top:643px;width:32px;height:1px;background:#b0b6bd;"></div>
<div class="t" style="left:2.00px;top:627px;font-size:13px;color:#333;transform:scaleX(0.9681);">1853</div>
<div style="left:0px;top:663px;width:32px;height:1px;background:#b0b6bd;"></div>
<div class="t" style="left:2.00px;top:647px;font-size:13px;color:#333;transform:scaleX(0.9681);">1854</div>
<div style="left:0px;top:683px;width:32px;height:1px;background:#b0b6bd;"></div>
<div class="t" style="left:2.00px;top:667px;font-size:13px;color:#333;transform:scaleX(0.9681);">1855</div>
<div style="left:1043px;top:184px;width:1px;height:498px;background:#dadcdf;"></div>
<div style="left:1164px;top:184px;width:1px;height:498px;background:#dadcdf;"></div>
<div style="left:1238px;top:184px;width:1px;height:498px;background:#dadcdf;"></div>
<div style="left:1315px;top:184px;width:1px;height:498px;background:#dadcdf;"></div>
<div style="left:996px;top:283px;width:349px;height:1px;background:#dadcdf;"></div>
<div style="left:996px;top:303px;width:349px;height:1px;background:#dadcdf;"></div>
<div style="left:996px;top:323px;width:349px;height:1px;background:#dadcdf;"></div>
<div style="left:996px;top:343px;width:349px;height:1px;background:#dadcdf;"></div>
<div style="left:996px;top:363px;width:349px;height:1px;background:#dadcdf;"></div>
<div style="left:996px;top:403px;width:349px;height:1px;background:#dadcdf;"></div>
<div style="left:996px;top:423px;width:349px;height:1px;background:#dadcdf;"></div>
<div style="left:996px;top:443px;width:349px;height:1px;background:#dadcdf;"></div>
<div style="left:996px;top:463px;width:349px;height:1px;background:#dadcdf;"></div>
<div style="left:996px;top:483px;width:349px;height:1px;background:#dadcdf;"></div>
<div style="left:996px;top:503px;width:349px;height:1px;background:#dadcdf;"></div>
<div style="left:996px;top:523px;width:349px;height:1px;background:#dadcdf;"></div>
<div style="left:996px;top:543px;width:349px;height:1px;background:#dadcdf;"></div>
<div style="left:996px;top:563px;width:349px;height:1px;background:#dadcdf;"></div>
<div style="left:996px;top:583px;width:349px;height:1px;background:#dadcdf;"></div>
<div style="left:996px;top:603px;width:349px;height:1px;background:#dadcdf;"></div>
<div style="left:996px;top:623px;width:349px;height:1px;background:#dadcdf;"></div>
<div style="left:996px;top:643px;width:349px;height:1px;background:#dadcdf;"></div>
<div style="left:996px;top:663px;width:349px;height:1px;background:#dadcdf;"></div>
<div style="left:996px;top:683px;width:349px;height:1px;background:#dadcdf;"></div>
<div style="left:996px;top:184px;width:0px;height:0px;"></div>
<div style="left:60px;top:184px;width:1px;height:498px;background:#000;"></div>
<div style="left:143px;top:184px;width:1px;height:498px;background:#000;"></div>
<div style="left:302px;top:184px;width:1px;height:498px;background:#000;"></div>
<div style="left:457px;top:184px;width:1px;height:498px;background:#000;"></div>
<div style="left:507px;top:184px;width:1px;height:498px;background:#000;"></div>
<div style="left:543px;top:184px;width:1px;height:498px;background:#000;"></div>
<div style="left:610px;top:184px;width:1px;height:498px;background:#000;"></div>
<div style="left:673px;top:184px;width:1px;height:498px;background:#000;"></div>
<div style="left:749px;top:184px;width:1px;height:498px;background:#000;"></div>
<div style="left:820px;top:184px;width:1px;height:498px;background:#000;"></div>
<div style="left:885px;top:184px;width:1px;height:498px;background:#000;"></div>
<div style="left:995px;top:184px;width:1px;height:498px;background:#000;"></div>
<div style="left:33px;top:262px;width:963px;height:1px;background:#000;"></div>
<div style="left:33px;top:264px;width:963px;height:1px;background:#000;"></div>
<div style="left:996px;top:262px;width:349px;height:3px;background:#000;"></div>
<div style="left:33px;top:283px;width:963px;height:1px;background:#000;"></div>
<div style="left:33px;top:303px;width:963px;height:1px;background:#000;"></div>
<div style="left:33px;top:323px;width:963px;height:1px;background:#000;"></div>
<div style="left:33px;top:343px;width:963px;height:1px;background:#000;"></div>
<div style="left:33px;top:363px;width:963px;height:1px;background:#000;"></div>
<div style="left:33px;top:403px;width:963px;height:1px;background:#000;"></div>
<div style="left:33px;top:423px;width:963px;height:1px;background:#000;"></div>
<div style="left:33px;top:443px;width:963px;height:1px;background:#000;"></div>
<div style="left:33px;top:463px;width:963px;height:1px;background:#000;"></div>
<div style="left:33px;top:483px;width:963px;height:1px;background:#000;"></div>
<div style="left:33px;top:503px;width:963px;height:1px;background:#000;"></div>
<div style="left:33px;top:523px;width:963px;height:1px;background:#000;"></div>
<div style="left:33px;top:543px;width:963px;height:1px;background:#000;"></div>
<div style="left:33px;top:563px;width:963px;height:1px;background:#000;"></div>
<div style="left:33px;top:583px;width:963px;height:1px;background:#000;"></div>
<div style="left:33px;top:603px;width:963px;height:1px;background:#000;"></div>
<div style="left:33px;top:623px;width:963px;height:1px;background:#000;"></div>
<div style="left:33px;top:643px;width:963px;height:1px;background:#000;"></div>
<div style="left:33px;top:663px;width:963px;height:1px;background:#000;"></div>
<div style="left:33px;top:683px;width:963px;height:1px;background:#000;"></div>
<div class="t" style="left:35.00px;top:209px;font-size:13px;font-weight:bold;color:#000;transform:scaleX(0.8173);">Sl.</div>
<div class="t" style="left:35.00px;top:225px;font-size:13px;font-weight:bold;color:#000;transform:scaleX(0.9545);">No.</div>
<div class="t" style="left:65.50px;top:207px;font-size:13px;font-weight:bold;color:#000;transform:scaleX(0.9625);">CONSUMER</div>
<div class="t" style="left:92.00px;top:227px;font-size:13px;font-weight:bold;color:#000;transform:scaleX(0.9884);">_ID</div>
<div class="t" style="left:163.50px;top:217px;font-size:13px;font-weight:bold;color:#000;transform:scaleX(0.9807);">CONSUMER_NAME</div>
<div class="t" style="left:355.00px;top:217px;font-size:13px;font-weight:bold;color:#000;transform:scaleX(0.9610);">Address</div>
<div class="t" style="left:462.00px;top:207px;font-size:13px;font-weight:bold;color:#000;transform:scaleX(0.9204);">CATEG</div>
<div class="t" style="left:470.00px;top:227px;font-size:13px;font-weight:bold;color:#000;transform:scaleX(0.9024);">ORY</div>
<div class="t" style="left:547.00px;top:197px;font-size:13px;font-weight:bold;color:#000;transform:scaleX(0.8964);">LATEST_O</div>
<div class="t" style="left:547.50px;top:217px;font-size:13px;font-weight:bold;color:#000;transform:scaleX(0.9650);">UTSTAND</div>
<div class="t" style="left:565.00px;top:236px;font-size:13px;font-weight:bold;color:#000;transform:scaleX(1.0378);">ING</div>
<div class="t" style="left:613.00px;top:188px;font-size:13px;font-weight:bold;color:#000;transform:scaleX(0.8855);">LATEST_P</div>
<div class="t" style="left:615.50px;top:207px;font-size:13px;font-weight:bold;color:#000;transform:scaleX(0.9869);">AYMENT</div>
<div class="t" style="left:617.50px;top:227px;font-size:13px;font-weight:bold;color:#000;transform:scaleX(1.0436);">_AMOU</div>
<div class="t" style="left:633.50px;top:246px;font-size:13px;font-weight:bold;color:#000;transform:scaleX(0.9802);">NT</div>
<div class="t" style="left:678.00px;top:197px;font-size:13px;font-weight:bold;color:#000;transform:scaleX(0.9064);">LATEST_PA</div>
<div class="t" style="left:677.00px;top:217px;font-size:13px;font-weight:bold;color:#000;transform:scaleX(0.9648);">YMENT_DA</div>
<div class="t" style="left:704.50px;top:236px;font-size:13px;font-weight:bold;color:#000;transform:scaleX(0.8421);">TE</div>
<div class="t" style="left:765.50px;top:200px;font-size:12px;font-weight:bold;color:#000;transform:scaleX(0.9589);">Date of</div>
<div class="t" style="left:754.50px;top:217px;font-size:12px;font-weight:bold;color:#000;transform:scaleX(0.8969);">Disconnecti</div>
<div class="t" style="left:778.00px;top:233px;font-size:12px;font-weight:bold;color:#000;transform:scaleX(0.9542);">on</div>
<div class="t" style="left:827.00px;top:217px;font-size:12px;font-weight:bold;color:#000;transform:scaleX(0.9396);">Amt. Paid</div>
<div class="t" style="left:888.00px;top:217px;font-size:12px;font-weight:bold;color:#000;transform:scaleX(0.9580);">Date Of Payment</div>
<div class="t" style="left:509px;top:214px;width:34px;text-align:center;font-size:13px;font-weight:bold;transform:rotate(-90deg) scaleX(0.92);transform-origin:17px 9px;line-height:18px">LOAD</div>
<div class="t" style="left:44.00px;top:267px;font-size:13px;color:#000;transform:scaleX(0.9676);">91</div>
<div class="t" style="left:67.00px;top:267px;font-size:13px;color:#000;transform:scaleX(0.9947);">1000831115</div>
<div class="t" style="left:146.00px;top:267px;font-size:13px;color:#000;transform:scaleX(1.0421);">Shering Nongkynrih</div>
<div class="t" style="left:305.00px;top:267px;font-size:13px;color:#000;transform:scaleX(1.0616);">10th Mile</div>
<div class="t" style="left:471.50px;top:267px;font-size:13px;color:#000;transform:scaleX(0.9318);">DLT</div>
<div class="t" style="left:522.00px;top:267px;font-size:13px;color:#000;transform:scaleX(0.9676);">2</div>
<div class="t" style="left:557.50px;top:267px;font-size:13px;color:#000;transform:scaleX(0.9807);">37,460</div>
<div class="t" style="left:622.50px;top:267px;font-size:13px;color:#000;transform:scaleX(0.9807);">25,000</div>
<div class="t" style="left:678.50px;top:267px;font-size:13px;color:#000;transform:scaleX(1.0069);">11-03-2025</div>
<div class="t" style="left:752.00px;top:267px;font-size:13px;color:#000;transform:scaleX(0.9834);">17.06.2026</div>
<div class="t" style="left:876.00px;top:267px;font-size:13px;color:#000;transform:scaleX(0.9676);">0</div>
<div class="t" style="left:888.00px;top:267px;font-size:13px;color:#000;transform:scaleX(0.9529);">DC_NP</div>
<div class="t" style="left:44.00px;top:287px;font-size:13px;color:#000;transform:scaleX(0.9676);">92</div>
<div class="t" style="left:67.00px;top:287px;font-size:13px;color:#000;transform:scaleX(0.9680);">1000230105</div>
<div class="t" style="left:146.00px;top:287px;font-size:13px;color:#000;transform:scaleX(1.0452);">M.D. Massar</div>
<div class="t" style="left:305.00px;top:287px;font-size:13px;color:#000;transform:scaleX(1.0616);">10th Mile</div>
<div class="t" style="left:471.50px;top:287px;font-size:13px;color:#000;transform:scaleX(0.9318);">DLT</div>
<div class="t" style="left:522.00px;top:287px;font-size:13px;color:#000;transform:scaleX(0.9676);">1</div>
<div class="t" style="left:557.50px;top:287px;font-size:13px;color:#000;transform:scaleX(0.9807);">16,385</div>
<div class="t" style="left:631.50px;top:287px;font-size:13px;color:#000;transform:scaleX(0.9676);">649</div>
<div class="t" style="left:678.50px;top:287px;font-size:13px;color:#000;transform:scaleX(0.9925);">28-08-2025</div>
<div class="t" style="left:752.00px;top:287px;font-size:13px;color:#000;transform:scaleX(0.9834);">17.06.2026</div>
<div class="t" style="left:876.00px;top:287px;font-size:13px;color:#000;transform:scaleX(0.9676);">0</div>
<div class="t" style="left:888.00px;top:287px;font-size:13px;color:#000;transform:scaleX(0.9529);">DC_NP</div>
<div class="t" style="left:44.00px;top:307px;font-size:13px;color:#000;transform:scaleX(0.9676);">93</div>
<div class="t" style="left:67.00px;top:307px;font-size:13px;color:#000;transform:scaleX(0.9680);">1000228349</div>
<div class="t" style="left:146.00px;top:307px;font-size:13px;color:#000;transform:scaleX(1.0170);">Gautam Sharma</div>
<div class="t" style="left:305.00px;top:307px;font-size:13px;color:#000;transform:scaleX(1.0616);">10th Mile</div>
<div class="t" style="left:471.50px;top:307px;font-size:13px;color:#000;transform:scaleX(0.9318);">DLT</div>
<div class="t" style="left:522.00px;top:307px;font-size:13px;color:#000;transform:scaleX(0.9676);">1</div>
<div class="t" style="left:557.50px;top:307px;font-size:13px;color:#000;transform:scaleX(1.0052);">11,476</div>
<div class="t" style="left:622.50px;top:307px;font-size:13px;color:#000;transform:scaleX(0.9807);">15,000</div>
<div class="t" style="left:678.50px;top:307px;font-size:13px;color:#000;transform:scaleX(0.9925);">03-02-2025</div>
<div class="t" style="left:752.00px;top:307px;font-size:13px;color:#000;transform:scaleX(0.9834);">17.06.2026</div>
<div class="t" style="left:844.00px;top:307px;font-size:13px;color:#000;transform:scaleX(0.9807);">10,000</div>
<div class="t" style="left:888.00px;top:307px;font-size:13px;color:#000;transform:scaleX(0.9880);">18.03.26</div>
<div class="t" style="left:44.00px;top:327px;font-size:13px;color:#000;transform:scaleX(0.9676);">94</div>
<div class="t" style="left:67.00px;top:327px;font-size:13px;color:#000;transform:scaleX(0.9680);">1000225002</div>
<div class="t" style="left:146.00px;top:327px;font-size:13px;color:#000;transform:scaleX(0.9949);">Puna Ram Sharma</div>
<div class="t" style="left:305.00px;top:327px;font-size:13px;color:#000;transform:scaleX(1.0616);">10th Mile</div>
<div class="t" style="left:471.50px;top:327px;font-size:13px;color:#000;transform:scaleX(0.9318);">DLT</div>
<div class="t" style="left:522.00px;top:327px;font-size:13px;color:#000;transform:scaleX(0.9676);">1</div>
<div class="t" style="left:557.50px;top:327px;font-size:13px;color:#000;transform:scaleX(1.0052);">11,014</div>
<div class="t" style="left:626.00px;top:327px;font-size:13px;color:#000;transform:scaleX(0.9832);">5,000</div>
<div class="t" style="left:678.50px;top:327px;font-size:13px;color:#000;transform:scaleX(0.9925);">13-06-2025</div>
<div class="t" style="left:752.00px;top:327px;font-size:13px;color:#000;transform:scaleX(0.9834);">17.06.2026</div>
<div class="t" style="left:844.00px;top:327px;font-size:13px;color:#000;transform:scaleX(0.9807);">10,000</div>
<div class="t" style="left:888.00px;top:327px;font-size:13px;color:#000;transform:scaleX(0.9880);">18.03.26</div>
<div class="t" style="left:44.00px;top:347px;font-size:13px;color:#000;transform:scaleX(0.9676);">95</div>
<div class="t" style="left:67.00px;top:347px;font-size:13px;color:#000;transform:scaleX(0.9680);">1000227795</div>
<div class="t" style="left:146.00px;top:347px;font-size:13px;color:#000;transform:scaleX(1.0223);">Sniawbhalang Dhar</div>
<div class="t" style="left:305.00px;top:347px;font-size:13px;color:#000;transform:scaleX(1.0762);">8th Mile</div>
<div class="t" style="left:471.50px;top:347px;font-size:13px;color:#000;transform:scaleX(0.9318);">DLT</div>
<div class="t" style="left:522.00px;top:347px;font-size:13px;color:#000;transform:scaleX(0.9676);">2</div>
<div class="t" style="left:557.50px;top:347px;font-size:13px;color:#000;transform:scaleX(0.9807);">21,954</div>
<div class="t" style="left:626.00px;top:347px;font-size:13px;color:#000;transform:scaleX(0.9832);">5,000</div>
<div class="t" style="left:678.50px;top:347px;font-size:13px;color:#000;transform:scaleX(0.9925);">26-05-2025</div>
<div class="t" style="left:752.00px;top:347px;font-size:13px;color:#000;transform:scaleX(0.9834);">17.06.2026</div>
<div class="t" style="left:876.00px;top:347px;font-size:13px;color:#000;transform:scaleX(0.9676);">0</div>
<div class="t" style="left:888.00px;top:347px;font-size:13px;color:#000;transform:scaleX(0.9529);">DC_NP</div>
<div class="t" style="left:44.00px;top:377px;font-size:13px;color:#000;transform:scaleX(0.9676);">96</div>
<div class="t" style="left:67.00px;top:377px;font-size:13px;color:#000;transform:scaleX(0.9680);">2213000148</div>
<div class="t" style="left:146.00px;top:367px;font-size:13px;color:#000;">NETFRA Solutions Pvt.</div>
<div class="t" style="left:146.00px;top:387px;font-size:13px;color:#000;">LTd.</div>
<div class="t" style="left:305.00px;top:377px;font-size:13px;color:#000;transform:scaleX(1.0762);">8th Mile</div>
<div class="t" style="left:472.00px;top:377px;font-size:13px;color:#000;transform:scaleX(0.8895);">CLT</div>
<div class="t" style="left:522.00px;top:377px;font-size:13px;color:#000;transform:scaleX(0.9676);">3</div>
<div class="t" style="left:557.50px;top:377px;font-size:13px;color:#000;transform:scaleX(0.9807);">14,231</div>
<div class="t" style="left:678.50px;top:377px;font-size:13px;color:#000;transform:scaleX(0.9925);">01-01-1900</div>
<div class="t" style="left:752.00px;top:377px;font-size:13px;color:#000;transform:scaleX(0.9834);">17.06.2026</div>
<div class="t" style="left:851.00px;top:377px;font-size:13px;color:#000;transform:scaleX(0.9832);">5,487</div>
<div class="t" style="left:888.00px;top:377px;font-size:13px;color:#000;transform:scaleX(0.9880);">23.03.26</div>
<div class="t" style="left:44.00px;top:407px;font-size:13px;color:#000;transform:scaleX(0.9676);">97</div>
<div class="t" style="left:67.00px;top:407px;font-size:13px;color:#000;transform:scaleX(0.9680);">2213000065</div>
<div class="t" style="left:146.00px;top:407px;font-size:13px;color:#000;transform:scaleX(0.9570);">PHREM SUNGOH</div>
<div class="t" style="left:305.00px;top:407px;font-size:13px;color:#000;transform:scaleX(1.0762);">8th Mile</div>
<div class="t" style="left:472.00px;top:407px;font-size:13px;color:#000;transform:scaleX(0.8895);">CLT</div>
<div class="t" style="left:522.00px;top:407px;font-size:13px;color:#000;transform:scaleX(0.9676);">2</div>
<div class="t" style="left:557.50px;top:407px;font-size:13px;color:#000;transform:scaleX(0.9807);">13,459</div>
<div class="t" style="left:678.50px;top:407px;font-size:13px;color:#000;transform:scaleX(0.9925);">01-01-1900</div>
<div class="t" style="left:752.00px;top:407px;font-size:13px;color:#000;transform:scaleX(0.9834);">17.06.2026</div>
<div class="t" style="left:844.00px;top:407px;font-size:13px;color:#000;transform:scaleX(0.9807);">15,363</div>
<div class="t" style="left:888.00px;top:407px;font-size:13px;color:#000;transform:scaleX(0.9880);">20.03.26</div>
<div class="t" style="left:44.00px;top:427px;font-size:13px;color:#000;transform:scaleX(0.9676);">98</div>
<div class="t" style="left:67.00px;top:427px;font-size:13px;color:#000;transform:scaleX(0.9680);">1000227988</div>
<div class="t" style="left:146.00px;top:427px;font-size:13px;color:#000;transform:scaleX(1.0125);">Wansalam Rupsi</div>
<div class="t" style="left:305.00px;top:427px;font-size:13px;color:#000;transform:scaleX(1.0762);">9th Mile</div>
<div class="t" style="left:471.50px;top:427px;font-size:13px;color:#000;transform:scaleX(0.9318);">DLT</div>
<div class="t" style="left:522.00px;top:427px;font-size:13px;color:#000;transform:scaleX(0.9676);">1</div>
<div class="t" style="left:557.50px;top:427px;font-size:13px;color:#000;transform:scaleX(0.9807);">29,623</div>
<div class="t" style="left:626.00px;top:427px;font-size:13px;color:#000;transform:scaleX(0.9832);">3,000</div>
<div class="t" style="left:678.50px;top:427px;font-size:13px;color:#000;transform:scaleX(0.9925);">06-08-2025</div>
<div class="t" style="left:752.00px;top:427px;font-size:13px;color:#000;transform:scaleX(0.9834);">17.06.2026</div>
<div class="t" style="left:844.00px;top:427px;font-size:13px;color:#000;transform:scaleX(0.9807);">10,000</div>
<div class="t" style="left:888.00px;top:427px;font-size:13px;color:#000;transform:scaleX(0.9880);">18.03.26</div>
<div class="t" style="left:44.00px;top:447px;font-size:13px;color:#000;transform:scaleX(0.9676);">99</div>
<div class="t" style="left:67.00px;top:447px;font-size:13px;color:#000;transform:scaleX(0.9680);">1000227921</div>
<div class="t" style="left:146.00px;top:447px;font-size:13px;color:#000;transform:scaleX(1.0351);">Barshet Khongji</div>
<div class="t" style="left:305.00px;top:447px;font-size:13px;color:#000;transform:scaleX(1.0762);">9th Mile</div>
<div class="t" style="left:460.00px;top:447px;font-size:13px;color:#000;transform:scaleX(1.0213);">BPL(M)</div>
<div class="t" style="left:522.00px;top:447px;font-size:13px;color:#000;transform:scaleX(0.9676);">1</div>
<div class="t" style="left:557.50px;top:447px;font-size:13px;color:#000;transform:scaleX(0.9807);">23,426</div>
<div class="t" style="left:622.50px;top:447px;font-size:13px;color:#000;transform:scaleX(0.9807);">13,300</div>
<div class="t" style="left:678.50px;top:447px;font-size:13px;color:#000;transform:scaleX(0.9925);">31-03-2025</div>
<div class="t" style="left:752.00px;top:447px;font-size:13px;color:#000;transform:scaleX(0.9834);">17.06.2026</div>
<div class="t" style="left:844.00px;top:447px;font-size:13px;color:#000;transform:scaleX(0.9807);">10,000</div>
<div class="t" style="left:888.00px;top:447px;font-size:13px;color:#000;transform:scaleX(0.9880);">18.03.26</div>
<div class="t" style="left:37.00px;top:467px;font-size:13px;color:#000;transform:scaleX(0.9676);">100</div>
<div class="t" style="left:67.00px;top:467px;font-size:13px;color:#000;transform:scaleX(0.9680);">1000228009</div>
<div class="t" style="left:146.00px;top:467px;font-size:13px;color:#000;transform:scaleX(1.0209);">Janita Wahlang</div>
<div class="t" style="left:305.00px;top:467px;font-size:13px;color:#000;transform:scaleX(1.0762);">9th Mile</div>
<div class="t" style="left:472.00px;top:467px;font-size:13px;color:#000;transform:scaleX(0.8895);">CLT</div>
<div class="t" style="left:522.00px;top:467px;font-size:13px;color:#000;transform:scaleX(0.9676);">1</div>
<div class="t" style="left:557.50px;top:467px;font-size:13px;color:#000;transform:scaleX(0.9807);">18,334</div>
<div class="t" style="left:622.50px;top:467px;font-size:13px;color:#000;transform:scaleX(0.9807);">15,000</div>
<div class="t" style="left:678.50px;top:467px;font-size:13px;color:#000;transform:scaleX(0.9925);">09-09-2025</div>
<div class="t" style="left:752.00px;top:467px;font-size:13px;color:#000;transform:scaleX(0.9834);">17.06.2026</div>
<div class="t" style="left:844.00px;top:467px;font-size:13px;color:#000;transform:scaleX(0.9807);">12,300</div>
<div class="t" style="left:888.00px;top:467px;font-size:13px;color:#000;transform:scaleX(0.9880);">18.03.26</div>
<div class="t" style="left:37.00px;top:487px;font-size:13px;color:#000;transform:scaleX(0.9676);">101</div>
<div class="t" style="left:67.00px;top:487px;font-size:13px;color:#000;transform:scaleX(0.9680);">1000227954</div>
<div class="t" style="left:146.00px;top:487px;font-size:13px;color:#000;">Lalsingh Bishwa</div>
<div class="t" style="left:305.00px;top:487px;font-size:13px;color:#000;transform:scaleX(1.0762);">9th Mile</div>
<div class="t" style="left:471.50px;top:487px;font-size:13px;color:#000;transform:scaleX(0.9318);">DLT</div>
<div class="t" style="left:522.00px;top:487px;font-size:13px;color:#000;transform:scaleX(0.9676);">1</div>
<div class="t" style="left:557.50px;top:487px;font-size:13px;color:#000;transform:scaleX(0.9807);">12,207</div>
<div class="t" style="left:626.00px;top:487px;font-size:13px;color:#000;transform:scaleX(0.9832);">8,216</div>
<div class="t" style="left:678.50px;top:487px;font-size:13px;color:#000;transform:scaleX(0.9925);">03-05-2025</div>
<div class="t" style="left:752.00px;top:487px;font-size:13px;color:#000;transform:scaleX(0.9834);">17.06.2026</div>
<div class="t" style="left:876.00px;top:487px;font-size:13px;color:#000;transform:scaleX(0.9676);">0</div>
<div class="t" style="left:888.00px;top:487px;font-size:13px;color:#000;transform:scaleX(0.9529);">DC_NP</div>
<div class="t" style="left:37.00px;top:507px;font-size:13px;color:#000;transform:scaleX(0.9676);">102</div>
<div class="t" style="left:67.00px;top:507px;font-size:13px;color:#000;transform:scaleX(0.9680);">1000845239</div>
<div class="t" style="left:146.00px;top:507px;font-size:13px;color:#000;transform:scaleX(1.0348);">Sunita Lyngdoh</div>
<div class="t" style="left:305.00px;top:507px;font-size:13px;color:#000;transform:scaleX(1.0265);">Baridua</div>
<div class="t" style="left:471.50px;top:507px;font-size:13px;color:#000;transform:scaleX(0.9318);">DLT</div>
<div class="t" style="left:522.00px;top:507px;font-size:13px;color:#000;transform:scaleX(0.9676);">4</div>
<div class="t" style="left:557.50px;top:507px;font-size:13px;color:#000;transform:scaleX(0.9807);">36,636</div>
<div class="t" style="left:622.50px;top:507px;font-size:13px;color:#000;transform:scaleX(0.9807);">20,000</div>
<div class="t" style="left:678.50px;top:507px;font-size:13px;color:#000;transform:scaleX(0.9925);">02-04-2025</div>
<div class="t" style="left:752.00px;top:507px;font-size:13px;color:#000;transform:scaleX(0.9834);">17.06.2026</div>
<div class="t" style="left:876.00px;top:507px;font-size:13px;color:#000;transform:scaleX(0.9676);">0</div>
<div class="t" style="left:888.00px;top:507px;font-size:13px;color:#000;transform:scaleX(0.9529);">DC_NP</div>
<div class="t" style="left:37.00px;top:527px;font-size:13px;color:#000;transform:scaleX(0.9676);">103</div>
<div class="t" style="left:67.00px;top:527px;font-size:13px;color:#000;transform:scaleX(0.9680);">1000625086</div>
<div class="t" style="left:146.00px;top:527px;font-size:13px;color:#000;transform:scaleX(1.0862);">Mrs. Niru Majaw</div>
<div class="t" style="left:305.00px;top:527px;font-size:13px;color:#000;transform:scaleX(1.0265);">Baridua</div>
<div class="t" style="left:460.00px;top:527px;font-size:13px;color:#000;transform:scaleX(1.0213);">BPL(M)</div>
<div class="t" style="left:522.00px;top:527px;font-size:13px;color:#000;transform:scaleX(0.9676);">1</div>
<div class="t" style="left:557.50px;top:527px;font-size:13px;color:#000;transform:scaleX(0.9807);">22,288</div>
<div class="t" style="left:626.00px;top:527px;font-size:13px;color:#000;transform:scaleX(0.9832);">3,205</div>
<div class="t" style="left:678.50px;top:527px;font-size:13px;color:#000;transform:scaleX(1.0069);">15-11-2024</div>
<div class="t" style="left:752.00px;top:527px;font-size:13px;color:#000;transform:scaleX(0.9834);">17.06.2026</div>
<div class="t" style="left:844.00px;top:527px;font-size:13px;color:#000;transform:scaleX(0.9807);">22,300</div>
<div class="t" style="left:888.00px;top:527px;font-size:13px;color:#000;transform:scaleX(0.9880);">18.03.26</div>
<div class="t" style="left:37.00px;top:547px;font-size:13px;color:#000;transform:scaleX(0.9676);">104</div>
<div class="t" style="left:67.00px;top:547px;font-size:13px;color:#000;transform:scaleX(0.9680);">1000838150</div>
<div class="t" style="left:146.00px;top:547px;font-size:13px;color:#000;transform:scaleX(1.0504);">Ripalin Majaw</div>
<div class="t" style="left:305.00px;top:547px;font-size:13px;color:#000;transform:scaleX(1.0265);">Baridua</div>
<div class="t" style="left:471.50px;top:547px;font-size:13px;color:#000;transform:scaleX(0.9318);">DLT</div>
<div class="t" style="left:522.00px;top:547px;font-size:13px;color:#000;transform:scaleX(0.9676);">2</div>
<div class="t" style="left:557.50px;top:547px;font-size:13px;color:#000;transform:scaleX(0.9807);">13,230</div>
<div class="t" style="left:622.50px;top:547px;font-size:13px;color:#000;transform:scaleX(0.9807);">10,000</div>
<div class="t" style="left:678.50px;top:547px;font-size:13px;color:#000;transform:scaleX(0.9925);">20-08-2025</div>
<div class="t" style="left:752.00px;top:547px;font-size:13px;color:#000;transform:scaleX(0.9834);">17.06.2026</div>
<div class="t" style="left:851.00px;top:547px;font-size:13px;color:#000;transform:scaleX(0.9832);">6,000</div>
<div class="t" style="left:888.00px;top:547px;font-size:13px;color:#000;transform:scaleX(0.9880);">18.03.26</div>
<div class="t" style="left:37.00px;top:567px;font-size:13px;color:#000;transform:scaleX(0.9676);">105</div>
<div class="t" style="left:67.00px;top:567px;font-size:13px;color:#000;transform:scaleX(0.9680);">2213000023</div>
<div class="t" style="left:146.00px;top:567px;font-size:13px;color:#000;transform:scaleX(1.0168);">Sutro Syiem</div>
<div class="t" style="left:305.00px;top:567px;font-size:13px;color:#000;transform:scaleX(1.0265);">Baridua</div>
<div class="t" style="left:471.50px;top:567px;font-size:13px;color:#000;transform:scaleX(0.9318);">DLT</div>
<div class="t" style="left:522.00px;top:567px;font-size:13px;color:#000;transform:scaleX(0.9676);">2</div>
<div class="t" style="left:557.50px;top:567px;font-size:13px;color:#000;transform:scaleX(0.9807);">10,939</div>
<div class="t" style="left:626.00px;top:567px;font-size:13px;color:#000;transform:scaleX(0.9832);">7,000</div>
<div class="t" style="left:678.50px;top:567px;font-size:13px;color:#000;transform:scaleX(0.9925);">27-07-2025</div>
<div class="t" style="left:752.00px;top:567px;font-size:13px;color:#000;transform:scaleX(0.9834);">17.06.2026</div>
<div class="t" style="left:844.00px;top:567px;font-size:13px;color:#000;transform:scaleX(0.9807);">10,939</div>
<div class="t" style="left:888.00px;top:567px;font-size:13px;color:#000;transform:scaleX(0.9880);">17.03.26</div>
<div class="t" style="left:37.00px;top:587px;font-size:13px;color:#000;transform:scaleX(0.9676);">106</div>
<div class="t" style="left:67.00px;top:587px;font-size:13px;color:#000;transform:scaleX(0.9680);">1000228305</div>
<div class="t" style="left:146.00px;top:587px;font-size:13px;color:#000;transform:scaleX(1.0309);">Jeremy A Sohkhlet</div>
<div class="t" style="left:305.00px;top:587px;font-size:13px;color:#000;transform:scaleX(1.0746);">Mawsmai</div>
<div class="t" style="left:471.50px;top:587px;font-size:13px;color:#000;transform:scaleX(0.9318);">DLT</div>
<div class="t" style="left:522.00px;top:587px;font-size:13px;color:#000;transform:scaleX(0.9676);">1</div>
<div class="t" style="left:557.50px;top:587px;font-size:13px;color:#000;transform:scaleX(0.9807);">10,335</div>
<div class="t" style="left:678.50px;top:587px;font-size:13px;color:#000;transform:scaleX(0.9925);">16-08-2022</div>
<div class="t" style="left:752.00px;top:587px;font-size:13px;color:#000;transform:scaleX(0.9834);">17.06.2026</div>
<div class="t" style="left:876.00px;top:587px;font-size:13px;color:#000;transform:scaleX(0.9676);">0</div>
<div class="t" style="left:888.00px;top:587px;font-size:13px;color:#000;transform:scaleX(0.9529);">DC_NP</div>
<div class="t" style="left:37.00px;top:607px;font-size:13px;color:#000;transform:scaleX(0.9676);">107</div>
<div class="t" style="left:67.00px;top:607px;font-size:13px;color:#000;transform:scaleX(0.9680);">1000228306</div>
<div class="t" style="left:146.00px;top:607px;font-size:13px;color:#000;transform:scaleX(1.0309);">Jeremy A Sohkhlet</div>
<div class="t" style="left:305.00px;top:607px;font-size:13px;color:#000;transform:scaleX(1.0746);">Mawsmai</div>
<div class="t" style="left:471.50px;top:607px;font-size:13px;color:#000;transform:scaleX(0.9318);">DLT</div>
<div class="t" style="left:522.00px;top:607px;font-size:13px;color:#000;transform:scaleX(0.9676);">1</div>
<div class="t" style="left:557.50px;top:607px;font-size:13px;color:#000;transform:scaleX(0.9807);">10,002</div>
<div class="t" style="left:678.50px;top:607px;font-size:13px;color:#000;transform:scaleX(0.9925);">16-08-2022</div>
<div class="t" style="left:752.00px;top:607px;font-size:13px;color:#000;transform:scaleX(0.9834);">17.06.2026</div>
<div class="t" style="left:876.00px;top:607px;font-size:13px;color:#000;transform:scaleX(0.9676);">0</div>
<div class="t" style="left:888.00px;top:607px;font-size:13px;color:#000;transform:scaleX(0.9529);">DC_NP</div>
<div class="t" style="left:37.00px;top:627px;font-size:13px;color:#000;transform:scaleX(0.9676);">108</div>
<div class="t" style="left:67.00px;top:627px;font-size:13px;color:#000;transform:scaleX(0.9680);">1000228067</div>
<div class="t" style="left:146.00px;top:627px;font-size:13px;color:#000;transform:scaleX(1.0218);">Donbor Singh K Syntiew</div>
<div class="t" style="left:305.00px;top:627px;font-size:13px;color:#000;transform:scaleX(1.0766);">Umdam</div>
<div class="t" style="left:471.50px;top:627px;font-size:13px;color:#000;transform:scaleX(0.9318);">DLT</div>
<div class="t" style="left:522.00px;top:627px;font-size:13px;color:#000;transform:scaleX(0.9676);">1</div>
<div class="t" style="left:557.50px;top:627px;font-size:13px;color:#000;transform:scaleX(0.9807);">21,019</div>
<div class="t" style="left:626.00px;top:627px;font-size:13px;color:#000;transform:scaleX(0.9832);">9,000</div>
<div class="t" style="left:678.50px;top:627px;font-size:13px;color:#000;transform:scaleX(1.0069);">11-03-2025</div>
<div class="t" style="left:752.00px;top:627px;font-size:13px;color:#000;transform:scaleX(0.9834);">17.06.2026</div>
<div class="t" style="left:844.00px;top:627px;font-size:13px;color:#000;transform:scaleX(0.9807);">10,000</div>
<div class="t" style="left:888.00px;top:627px;font-size:13px;color:#000;transform:scaleX(0.9880);">20.03.26</div>
<div class="t" style="left:37.00px;top:647px;font-size:13px;color:#000;transform:scaleX(0.9676);">109</div>
<div class="t" style="left:67.00px;top:647px;font-size:13px;color:#000;transform:scaleX(0.9680);">1000225859</div>
<div class="t" style="left:146.00px;top:647px;font-size:13px;color:#000;transform:scaleX(1.0745);">Monti Devi</div>
<div class="t" style="left:305.00px;top:647px;font-size:13px;color:#000;transform:scaleX(1.0216);">Khanapara</div>
<div class="t" style="left:471.50px;top:647px;font-size:13px;color:#000;transform:scaleX(0.9318);">DLT</div>
<div class="t" style="left:522.00px;top:647px;font-size:13px;color:#000;transform:scaleX(0.9676);">1</div>
<div class="t" style="left:557.50px;top:647px;font-size:13px;color:#000;transform:scaleX(0.9807);">87,419</div>
<div class="t" style="left:622.50px;top:647px;font-size:13px;color:#000;transform:scaleX(0.9807);">40,000</div>
<div class="t" style="left:678.50px;top:647px;font-size:13px;color:#000;transform:scaleX(0.9925);">07-03-2025</div>
<div class="t" style="left:752.50px;top:649px;font-size:11px;color:#000;transform:scaleX(1.1078);">19.03.2026</div>
<div class="t" style="left:875.00px;top:645px;font-size:15px;color:#000;transform:scaleX(1.0187);">0</div>
<div class="t" style="left:888.00px;top:649px;font-size:11px;color:#000;transform:scaleX(0.9652);">DC_NP</div>
<div class="t" style="left:37.00px;top:667px;font-size:13px;color:#000;transform:scaleX(1.0128);">110</div>
<div class="t" style="left:67.00px;top:667px;font-size:13px;color:#000;transform:scaleX(0.9680);">1000226187</div>
<div class="t" style="left:146.00px;top:667px;font-size:13px;color:#000;transform:scaleX(1.0560);">Jushmiudin Ahmed</div>
<div class="t" style="left:305.00px;top:667px;font-size:13px;color:#000;transform:scaleX(1.0216);">Khanapara</div>
<div class="t" style="left:471.50px;top:667px;font-size:13px;color:#000;transform:scaleX(0.9318);">DLT</div>
<div class="t" style="left:522.00px;top:667px;font-size:13px;color:#000;transform:scaleX(0.9676);">1</div>
<div class="t" style="left:557.50px;top:667px;font-size:13px;color:#000;transform:scaleX(0.9807);">85,369</div>
<div class="t" style="left:622.50px;top:667px;font-size:13px;color:#000;transform:scaleX(0.9807);">20,000</div>
<div class="t" style="left:678.50px;top:667px;font-size:13px;color:#000;transform:scaleX(0.9925);">10-09-2025</div>
<div class="t" style="left:752.50px;top:669px;font-size:11px;color:#000;transform:scaleX(1.1078);">19.03.2026</div>
<div class="t" style="left:875.00px;top:665px;font-size:15px;color:#000;transform:scaleX(1.0187);">0</div>
<div class="t" style="left:888.00px;top:669px;font-size:11px;color:#000;transform:scaleX(0.9652);">DC_NP</div>
<svg style="left:60px;top:263px" width="85" height="22"><rect x="1" y="1.5" width="82" height="19" fill="none" stroke="#000" stroke-width="2" stroke-dasharray="4 2"/></svg>
<div style="left:1346px;top:164px;width:16px;height:518px;background:#dee3e9;"></div>
<div style="left:1362px;top:164px;width:1px;height:534px;background:#9aa1aa;"></div>
<div style="left:1363px;top:164px;width:3px;height:534px;background:#eef1f4;"></div>
<div style="left:1347px;top:164px;width:15px;height:8px;background:#fff;border:1px solid #80878f;box-sizing:border-box;"></div>
<div style="left:1350px;top:166px;width:8px;height:1px;background:#6d747c;"></div>
<svg style="left:1349px;top:178px" width="9" height="5"><path d="M0 5 L4.5 0 L9 5 Z" fill="#444"/></svg>
<svg style="left:1349px;top:671px" width="9" height="5"><path d="M0 0 L4.5 5 L9 0 Z" fill="#444"/></svg>
<div style="left:1346px;top:619px;width:15px;height:17px;background:linear-gradient(90deg,#f6f8fa,#e6eaef);border:1px solid #8f969e;border-radius:2px;box-sizing:border-box;"></div>
<div style="left:1350px;top:624px;width:8px;height:1px;background:#656c74;"></div>
<div style="left:1350px;top:626px;width:8px;height:1px;background:#656c74;"></div>
<div style="left:1350px;top:628px;width:8px;height:1px;background:#656c74;"></div>
<div style="left:1350px;top:630px;width:8px;height:1px;background:#656c74;"></div>
<div style="left:0px;top:682px;width:1362px;height:16px;background:#dfe3e8;"></div>
<div style="left:0px;top:696px;width:1366px;height:1px;background:#eef0f3;"></div>
<div style="left:0px;top:697px;width:1366px;height:2px;background:#9ca2aa;"></div>
<svg style="left:0px;top:682px" width="62" height="16">
<rect x="5" y="4" width="1.2" height="8" fill="#555"/><path d="M12 4 L7 8 L12 12 Z" fill="#555"/>
<path d="M26 4 L21 8 L26 12 Z" fill="#555"/>
<path d="M37 4 L42 8 L37 12 Z" fill="#555"/>
<path d="M50 4 L55 8 L50 12 Z" fill="#555"/><rect x="56" y="4" width="1.2" height="8" fill="#555"/>
</svg>
<div style="left:62px;top:682px;width:1px;height:16px;background:#b9bec5;"></div>
<div style="left:144px;top:682px;width:664px;height:1px;background:#a0a6ae;"></div>
<div style="left:0px;top:682px;width:62px;height:1px;background:#a0a6ae;"></div>
<svg style="left:63px;top:682px" width="760" height="16"><path d="M67 15 L80 1.5" stroke="#8e959d" stroke-width="1" fill="none"/><path d="M69 15 L82 1.5" stroke="#f4f6f8" stroke-width="1" fill="none"/><path d="M67 15 L72 10 L74 15 Z" fill="#eef1f4"/><path d="M176 15 L189 1.5" stroke="#8e959d" stroke-width="1" fill="none"/><path d="M178 15 L191 1.5" stroke="#f4f6f8" stroke-width="1" fill="none"/><path d="M176 15 L181 10 L183 15 Z" fill="#eef1f4"/><path d="M217 15 L230 1.5" stroke="#8e959d" stroke-width="1" fill="none"/><path d="M219 15 L232 1.5" stroke="#f4f6f8" stroke-width="1" fill="none"/><path d="M217 15 L222 10 L224 15 Z" fill="#eef1f4"/><path d="M275 15 L288 1.5" stroke="#8e959d" stroke-width="1" fill="none"/><path d="M277 15 L290 1.5" stroke="#f4f6f8" stroke-width="1" fill="none"/><path d="M275 15 L280 10 L282 15 Z" fill="#eef1f4"/><path d="M333 15 L346 1.5" stroke="#8e959d" stroke-width="1" fill="none"/><path d="M335 15 L348 1.5" stroke="#f4f6f8" stroke-width="1" fill="none"/><path d="M333 15 L338 10 L340 15 Z" fill="#eef1f4"/><path d="M469 15 L482 1.5" stroke="#8e959d" stroke-width="1" fill="none"/><path d="M471 15 L484 1.5" stroke="#f4f6f8" stroke-width="1" fill="none"/><path d="M469 15 L474 10 L476 15 Z" fill="#eef1f4"/><path d="M530 15 L543 1.5" stroke="#8e959d" stroke-width="1" fill="none"/><path d="M532 15 L545 1.5" stroke="#f4f6f8" stroke-width="1" fill="none"/><path d="M530 15 L535 10 L537 15 Z" fill="#eef1f4"/><path d="M590 15 L603 1.5" stroke="#8e959d" stroke-width="1" fill="none"/><path d="M592 15 L605 1.5" stroke="#f4f6f8" stroke-width="1" fill="none"/><path d="M590 15 L595 10 L597 15 Z" fill="#eef1f4"/><path d="M649 15 L662 1.5" stroke="#8e959d" stroke-width="1" fill="none"/><path d="M651 15 L664 1.5" stroke="#f4f6f8" stroke-width="1" fill="none"/><path d="M649 15 L654 10 L656 15 Z" fill="#eef1f4"/><path d="M711 15 L724 1.5" stroke="#8e959d" stroke-width="1" fill="none"/><path d="M713 15 L726 1.5" stroke="#f4f6f8" stroke-width="1" fill="none"/><path d="M711 15 L716 10 L718 15 Z" fill="#eef1f4"/></svg>
<svg style="left:62px;top:682px" width="82" height="16"><path d="M0.5 0 H82 L68 15 H0.5 Z" fill="#fff"/><path d="M82 0 L68 15" stroke="#8e959d" stroke-width="1"/></svg>
<div class="t" style="left:74.00px;top:683px;font-size:13px;font-weight:bold;color:#3a4555;transform:scaleX(0.9057);-webkit-text-stroke-width:0.1px;">DC_Cons</div>
<div class="t" style="left:147.00px;top:683px;font-size:13px;color:#4a5361;transform:scaleX(0.9374);-webkit-text-stroke-width:0.1px;">Permanent_DC</div>
<div class="t" style="left:251.00px;top:683px;font-size:13px;color:#4a5361;transform:scaleX(0.8603);-webkit-text-stroke-width:0.1px;">OTS</div>
<div class="t" style="left:293.00px;top:683px;font-size:13px;color:#4a5361;transform:scaleX(0.8167);-webkit-text-stroke-width:0.1px;">DC_NP</div>
<div class="t" style="left:349.00px;top:683px;font-size:13px;color:#4a5361;transform:scaleX(0.9465);-webkit-text-stroke-width:0.1px;">Sheet1</div>
<div class="t" style="left:412.50px;top:683px;font-size:13px;color:#4a5361;transform:scaleX(0.9514);-webkit-text-stroke-width:0.1px;">Re-connected cons.</div>
<div class="t" style="left:547.00px;top:683px;font-size:13px;color:#4a5361;transform:scaleX(0.9708);-webkit-text-stroke-width:0.1px;">Sheet2</div>
<div class="t" style="left:607.00px;top:683px;font-size:13px;color:#4a5361;transform:scaleX(0.9708);-webkit-text-stroke-width:0.1px;">Sheet3</div>
<div class="t" style="left:667.00px;top:683px;font-size:13px;color:#4a5361;transform:scaleX(0.9708);-webkit-text-stroke-width:0.1px;">Sheet4</div>
<div class="t" style="left:727.00px;top:683px;font-size:13px;color:#4a5361;transform:scaleX(0.9708);-webkit-text-stroke-width:0.1px;">Sheet5</div>
<div class="t" style="left:787.00px;top:683px;font-size:13px;color:#4a5361;transform:scaleX(0.9075);-webkit-text-stroke-width:0.1px;">She</div>
<div style="left:808px;top:683px;width:7px;height:14px;background:#fff;border:1px solid #6f767e;box-sizing:border-box;"></div>
<div style="left:811px;top:686px;width:1px;height:8px;background:#888;"></div>
<svg style="left:820px;top:686px" width="6" height="9"><path d="M6 0 L0 4.5 L6 9 Z" fill="#444"/></svg>
<div style="left:834px;top:683px;width:393px;height:14px;background:linear-gradient(#f7f9fb,#e4e8ed);border:1px solid #8f969e;border-radius:2px;box-sizing:border-box;"></div>
<div style="left:1026px;top:686px;width:1px;height:8px;background:#6b7279;"></div>
<div style="left:1028px;top:686px;width:1px;height:8px;background:#6b7279;"></div>
<div style="left:1030px;top:686px;width:1px;height:8px;background:#6b7279;"></div>
<div style="left:1032px;top:686px;width:1px;height:8px;background:#6b7279;"></div>
<svg style="left:1326px;top:686px" width="6" height="9"><path d="M0 0 L6 4.5 L0 9 Z" fill="#444"/></svg>
<div style="left:1338px;top:683px;width:8px;height:15px;background:#fff;border:1px solid #6f767e;box-sizing:border-box;"></div>
<div style="left:1341px;top:686px;width:1px;height:8px;background:#888;"></div>
<div style="left:0px;top:699px;width:1366px;height:1px;background:#f8f9fa;"></div>
<div style="left:0px;top:700px;width:1366px;height:20px;background:linear-gradient(#e7eaed,#d6d9dd 50%,#c6cacf);"></div>
<div style="left:0px;top:719px;width:1366px;height:1px;background:#b8bcc1;"></div>
<div class="t" style="left:8.00px;top:703px;font-size:12px;color:#37404c;transform:scaleX(0.9304);-webkit-text-stroke-width:0.1px;">Select destination and press ENTER or choose Paste</div>
<div class="t" style="left:1002.60px;top:703px;font-size:12px;color:#37404c;transform:scaleX(0.9587);-webkit-text-stroke-width:0.1px;">Count: 0</div>
<div class="t" style="left:1079.80px;top:703px;font-size:12px;color:#37404c;transform:scaleX(0.8944);-webkit-text-stroke-width:0.1px;">Sum: 0</div>
<div style="left:680px;top:700px;width:1px;height:19px;background:rgba(255,255,255,0.7);"></div>
<div style="left:681px;top:700px;width:1px;height:19px;background:linear-gradient(#c9ccd0,#74797f 50%,#a9adb2);"></div>
<div style="left:682px;top:700px;width:1px;height:19px;background:rgba(255,255,255,0.7);"></div>
<div style="left:1124px;top:700px;width:1px;height:19px;background:rgba(255,255,255,0.7);"></div>
<div style="left:1125px;top:700px;width:1px;height:19px;background:linear-gradient(#c9ccd0,#74797f 50%,#a9adb2);"></div>
<div style="left:1126px;top:700px;width:1px;height:19px;background:rgba(255,255,255,0.7);"></div>
<div style="left:1129px;top:700px;width:19px;height:19px;background:linear-gradient(#fde9a4,#f8d36a);border:1px solid #e0b050;border-radius:2px;box-sizing:border-box;"></div>
<svg style="left:1131px;top:702px" width="60" height="15">
<rect x="1" y="2" width="13" height="10" fill="#4a4f56"/>
<g fill="#fff" shape-rendering="crispEdges"><rect x="2" y="3" width="3" height="2"/><rect x="6" y="3" width="3" height="2"/><rect x="10" y="3" width="3" height="2"/><rect x="2" y="6" width="3" height="2"/><rect x="6" y="6" width="3" height="2"/><rect x="10" y="6" width="3" height="2"/><rect x="2" y="9" width="3" height="2"/><rect x="6" y="9" width="3" height="2"/><rect x="10" y="9" width="3" height="2"/></g>
<rect x="19.5" y="1.5" width="13" height="11" fill="#a9adb3" stroke="#5f646b"/>
<rect x="22" y="3" width="8" height="8" fill="#f4f5f6"/><path d="M23.5 5h5M23.5 7h5M23.5 9h5" stroke="#999" stroke-width="0.8"/>
<rect x="38.5" y="1.5" width="13" height="11" fill="#a9adb3" stroke="#5f646b"/>
<rect x="39.5" y="2" width="3" height="6" fill="#fff"/><rect x="43.5" y="2" width="3" height="6" fill="#fff"/>
</svg>
<div class="t" style="left:1195.70px;top:703px;font-size:12px;color:#37404c;transform:scaleX(0.8631);-webkit-text-stroke-width:0.1px;">100%</div>
<svg style="left:1228px;top:699px" width="138" height="21">
<circle cx="10" cy="10" r="7.5" fill="url(#zg)" stroke="#7d848c"/>
<defs><linearGradient id="zg" x1="0" y1="0" x2="0" y2="1"><stop offset="0" stop-color="#fff"/><stop offset="1" stop-color="#d9dde2"/></linearGradient></defs>
<rect x="6" y="9.3" width="8" height="1.6" fill="#333"/>
<path d="M18 10.5 H118" stroke="#9aa1a9" stroke-width="1"/>
<path d="M18 11.5 H118" stroke="#fff" stroke-width="1"/>
<path d="M63.5 3.5 H72.5 V12 L68 16 L63.5 12 Z" fill="url(#zg)" stroke="#6f767e"/>
<circle cx="126" cy="10" r="7.5" fill="url(#zg)" stroke="#7d848c"/>
<rect x="122" y="9.2" width="8" height="1.8" fill="#333"/><rect x="125.1" y="6" width="1.8" height="8" fill="#333"/>
</svg>
<div style="left:0px;top:720px;width:1366px;height:48px;background:#c9e5eb;"></div>
<svg style="left:14px;top:726px" width="36" height="32">
<rect x="5" y="8" width="6" height="18" fill="#1f7fd8"/><rect x="5" y="8" width="2" height="18" fill="#1758a8"/>
<circle cx="21.5" cy="21" r="7.5" fill="#2d9be8"/>
<circle cx="24" cy="8" r="8" fill="#c42b1c"/>
<text x="24" y="12" font-family="Liberation Sans" font-size="11" fill="#fff" text-anchor="middle">2</text>
</svg>
<div class="t" style="left:50.40px;top:730px;font-size:12px;color:#1b1b1b;transform:scaleX(1.0090);-webkit-text-stroke-width:0.1px;">Humid</div>
<div class="t" style="left:50.40px;top:745px;font-size:12px;color:#5c6569;-webkit-text-stroke-width:0.1px;">Now</div>
<svg style="left:427px;top:732px" width="25" height="25">
<defs><linearGradient id="wg" x1="0" y1="0" x2="1" y2="1"><stop offset="0" stop-color="#3fc0f5"/><stop offset="1" stop-color="#0a6fd6"/></linearGradient></defs>
<rect x="0.5" y="0.5" width="11" height="11" fill="url(#wg)" rx="1"/><rect x="12.8" y="0.5" width="11" height="11" fill="url(#wg)" rx="1"/>
<rect x="0.5" y="12.8" width="11" height="11" fill="url(#wg)" rx="1"/><rect x="12.8" y="12.8" width="11" height="11" fill="url(#wg)" rx="1"/>
</svg>
<div style="left:465px;top:729px;width:218px;height:30px;background:#edf6f8;border:1px solid #c4d5db;border-radius:15px;box-sizing:border-box;"></div>
<svg style="left:474px;top:735px" width="18" height="18"><circle cx="7.5" cy="7.5" r="5.3" fill="none" stroke="#222" stroke-width="1.6"/><path d="M11.3 11.3 L15.5 15.5" stroke="#222" stroke-width="1.8"/></svg>
<div class="t" style="left:501.60px;top:737px;font-size:13px;color:#555d62;transform:scaleX(0.9465);-webkit-text-stroke-width:0.1px;">Search</div>
<svg style="left:631px;top:731px" width="48" height="27">
<path d="M4 6 Q10 2 22 3 Q34 1 44 5 Q47 14 44 22 Q30 26 20 24 Q8 26 3 22 Q0 14 4 6 Z" fill="#243a76"/>
<path d="M3 20 Q12 15 22 19 Q32 15 45 19 L44 23 Q30 26 20 24 Q8 26 3 22 Z" fill="#5c6aa0"/>
<path d="M6 21 Q14 18 24 21 Q34 18 44 21" stroke="#3fb08f" stroke-width="2" fill="none"/>
<circle cx="24" cy="12" r="8.5" fill="#f49bb0"/><circle cx="21" cy="10" r="1.5" fill="#e27b95"/><circle cx="27" cy="14" r="1.8" fill="#e27b95"/>
</svg>
<svg style="left:696px;top:732px" width="26" height="24">
<rect x="7" y="0" width="17" height="17" fill="#f5f5f5" stroke="#d0d0d0" stroke-width="0.5"/>
<rect x="0" y="6" width="17" height="17" fill="#1e1e1e"/>
<rect x="7" y="6" width="10" height="11" fill="#b9b9b9"/>
</svg>
<svg style="left:739px;top:732px" width="27" height="24">
<defs><linearGradient id="cpL" x1="0" y1="0" x2="0" y2="1"><stop offset="0" stop-color="#13a4f2"/><stop offset="0.5" stop-color="#2ea36a"/><stop offset="1" stop-color="#ffd000"/></linearGradient>
<linearGradient id="cpR" x1="1" y1="0" x2="0" y2="1"><stop offset="0" stop-color="#b552e8"/><stop offset="0.5" stop-color="#ff4f7e"/><stop offset="1" stop-color="#ffad3a"/></linearGradient></defs>
<path d="M14 1 H19 Q21 1 22 4 L23 7 H14 Z" fill="#1d54d0"/>
<path d="M7 1 H17 L11 16 H3 Q0 16 1 13 L5 3 Q6 1 7 1 Z" fill="url(#cpL)"/>
<path d="M6 16 H12 L11 22 H9 Q7 22 6.5 19 Z" fill="#f0532a"/>
<path d="M14 7 H23 Q26 7 25 10 L21 20 Q20 22 18 22 H9 Z" fill="url(#cpR)"/>
</svg>
<svg style="left:783px;top:732px" width="26" height="24">
<circle cx="19" cy="5" r="3" fill="#7b83eb"/><rect x="14" y="9" width="10" height="10" rx="4" fill="#7b83eb"/>
<circle cx="13" cy="4" r="3.5" fill="#5059c9"/><rect x="7" y="8" width="13" height="15" rx="5" fill="#5059c9"/>
<rect x="0" y="6" width="13" height="13" rx="1.5" fill="#4b53bc"/>
<text x="6.5" y="16.5" font-family="Liberation Sans" font-size="10" font-weight="bold" fill="#fff" text-anchor="middle">T</text>
</svg>
<svg style="left:827px;top:733px" width="26" height="22">
<path d="M0 2 Q0 0 2 0 H9 L11 3 H24 Q25 3 25 5 V20 Q25 21 24 21 H1 Q0 21 0 20 Z" fill="#e9a812"/>
<rect x="0" y="5" width="25" height="16" rx="1" fill="#ffd04a"/>
<rect x="6" y="14" width="13" height="7" rx="1" fill="#1b7fd6"/>
</svg>
<div style="left:837px;top:760px;width:6px;height:3px;background:#6d7478;border-radius:2px;"></div>
<svg style="left:871px;top:731px" width="26" height="26">
<defs><linearGradient id="eg1" x1="0" y1="0" x2="1" y2="0.7"><stop offset="0" stop-color="#22a6ee"/><stop offset="0.5" stop-color="#29c2c9"/><stop offset="1" stop-color="#66dd55"/></linearGradient>
<linearGradient id="eg2" x1="0" y1="0" x2="0.6" y2="1"><stop offset="0" stop-color="#1a8ee0"/><stop offset="1" stop-color="#0b5bb8"/></linearGradient></defs>
<circle cx="13" cy="13" r="12.3" fill="url(#eg1)"/>
<path d="M1 14 Q2 6 11 6 Q16 6.5 17.5 11 Q14 10 12.5 13 Q11 18 17 20 Q21 21 24 18 Q21 25 13 25.3 Q2 25 1 14 Z" fill="url(#eg2)"/>
<path d="M6 16 Q7 10 12 9.5 Q15.5 9.5 17.5 11 Q14 10 12.5 13 Q11 18 17 20 Q21 21 24 18 Q20 24 13 24 Q6 22 6 16 Z" fill="#0d4f9e" opacity="0.6"/>
<circle cx="13" cy="13.5" r="2.8" fill="#cde6ec"/>
</svg>
<div style="left:881px;top:760px;width:6px;height:3px;background:#6d7478;border-radius:2px;"></div>
<div style="left:909px;top:725px;width:38px;height:38px;background:#e3f0f4;border-radius:4px;"></div>
<svg style="left:915px;top:732px" width="24" height="23">
<rect x="0.5" y="0.5" width="23" height="22" rx="1" fill="#fff" stroke="#1e7b3a"/>
<rect x="2" y="2" width="20" height="19" fill="#d9f0de"/>
<path d="M4 3 L9 3 L12 8 L15 3 L19 3 L14 11 L19 19 L15 19 L12 14 L9 19 L4 19 L9 11 Z" fill="#2b8a3e"/>
<path d="M14 12 L22 9 L22 20 L14 20 Z" fill="#eef5ef" stroke="#6aa87a" stroke-width="0.6"/>
</svg>
<div style="left:920px;top:760px;width:16px;height:3px;background:#1f6fd6;border-radius:2px;"></div>
<svg style="left:1153px;top:738px" width="14" height="10"><path d="M1.5 8 L7 2.5 L12.5 8" fill="none" stroke="#222" stroke-width="1.4"/></svg>
<div class="t" style="left:1186.50px;top:730px;font-size:12px;color:#1b1b1b;transform:scaleX(0.8841);-webkit-text-stroke-width:0.1px;">ENG</div>
<div class="t" style="left:1192.25px;top:746px;font-size:12px;color:#1b1b1b;transform:scaleX(0.9583);-webkit-text-stroke-width:0.1px;">IN</div>
<svg style="left:1226px;top:734px" width="46" height="20">
<rect x="1.5" y="3.5" width="12" height="10" fill="none" stroke="#222" stroke-width="1.2"/>
<path d="M5 17.5 h7 M8 13.5 v4" stroke="#222" stroke-width="1.2"/>
<rect x="14" y="1.5" width="4" height="6" rx="2" fill="none" stroke="#222" stroke-width="1.1"/><path d="M16 7.5 V17" stroke="#222" stroke-width="1.2"/>
<path d="M29 8 h3 l4 -4 v12 l-4 -4 h-3 z" fill="none" stroke="#222" stroke-width="1.1"/>
<circle cx="38" cy="13.5" r="4.2" fill="#222"/><path d="M36 11.5 L40 15.5 M40 11.5 L36 15.5" stroke="#fff" stroke-width="1.1"/>
</svg>
<div class="t" style="left:1318.00px;top:730px;font-size:12px;color:#1b1b1b;transform:scaleX(0.9657);-webkit-text-stroke-width:0.1px;">14:23</div>
<div class="t" style="left:1285.00px;top:746px;font-size:12px;color:#1b1b1b;transform:scaleX(1.0099);-webkit-text-stroke-width:0.1px;">01-04-2026</div>
</body></html>
